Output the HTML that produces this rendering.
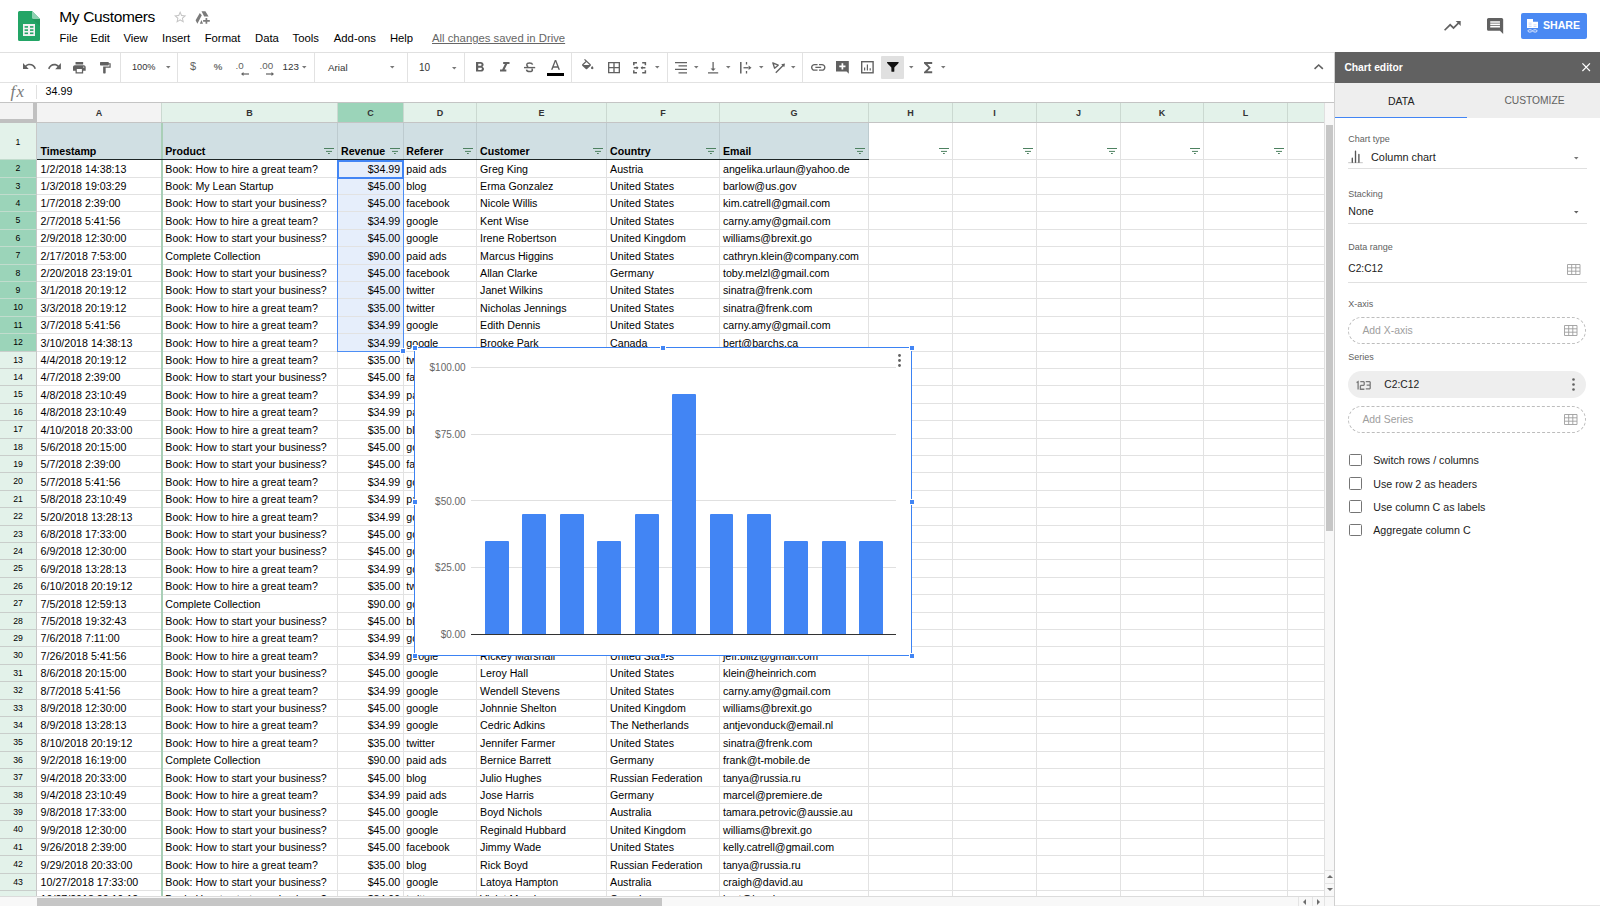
<!DOCTYPE html><html><head><meta charset="utf-8"><title>My Customers</title><style>
*{margin:0;padding:0;box-sizing:border-box}
html,body{width:1600px;height:906px;overflow:hidden;background:#fff;font-family:"Liberation Sans",sans-serif;color:#000}
.a{position:absolute}
.t{position:absolute;white-space:nowrap;line-height:1}
svg{position:absolute;overflow:visible}
</style></head><body>
<svg style="left:18px;top:11px" width="22" height="30" viewBox="0 0 22 30">
<path d="M1.5 0H14L22 8V28.5A1.5 1.5 0 0 1 20.5 30H1.5A1.5 1.5 0 0 1 0 28.5V1.5A1.5 1.5 0 0 1 1.5 0Z" fill="#23a566"/>
<path d="M14 0L22 8H15.5A1.5 1.5 0 0 1 14 6.5Z" fill="#8ed1b1"/>
<path d="M14 8L22 15V8Z" fill="#1e8e54" opacity="0.5"/>
<rect x="5" y="13" width="12" height="12" fill="#f1f1f1"/>
<rect x="6.6" y="15.1" width="3.4" height="1.6" fill="#23a566"/><rect x="12" y="15.1" width="3.4" height="1.6" fill="#23a566"/>
<rect x="6.6" y="18.3" width="3.4" height="1.6" fill="#23a566"/><rect x="12" y="18.3" width="3.4" height="1.6" fill="#23a566"/>
<rect x="6.6" y="21.5" width="3.4" height="1.6" fill="#23a566"/><rect x="12" y="21.5" width="3.4" height="1.6" fill="#23a566"/>
</svg>
<div class="t" style="left:59.3px;top:8.7px;font-size:15.5px;letter-spacing:-0.35px;color:#000">My Customers</div>
<svg style="left:173.6px;top:10.6px" width="12.3" height="11.9" viewBox="2 2 20 19.2" preserveAspectRatio="none"><path d="M22 9.24l-7.19-.62L12 2 9.19 8.63 2 9.24l5.46 4.73L5.82 21 12 17.27 18.18 21l-1.63-7.03L22 9.24zM12 15.4l-3.76 2.27 1-4.28-3.32-2.88 4.38-.38L12 6.1l1.710 4.04 4.38.38-3.32 2.88 1 4.28L12 15.4z" fill="#c4c4c4"/></svg>
<svg style="left:0;top:0" width="1" height="1"><path d="M195.6 20.3L199.8 12.9 201.8 15.3 197.4 23.8z M201.5 11.2H205.4L208.6 16.5H204.2z M199.8 23.8L201.5 20 203 23.8z" fill="#7b7b7b"/><path d="M206.4 17.9v5.9M203.1 20.8h6.7" stroke="#7b7b7b" stroke-width="1.7"/></svg>
<div class="t" style="left:59.5px;top:32.9px;font-size:11.3px;color:#000">File</div>
<div class="t" style="left:90.5px;top:32.9px;font-size:11.3px;color:#000">Edit</div>
<div class="t" style="left:123.5px;top:32.9px;font-size:11.3px;color:#000">View</div>
<div class="t" style="left:162px;top:32.9px;font-size:11.3px;color:#000">Insert</div>
<div class="t" style="left:204.7px;top:32.9px;font-size:11.3px;color:#000">Format</div>
<div class="t" style="left:255px;top:32.9px;font-size:11.3px;color:#000">Data</div>
<div class="t" style="left:292.5px;top:32.9px;font-size:11.3px;color:#000">Tools</div>
<div class="t" style="left:333.8px;top:32.9px;font-size:11.3px;color:#000">Add-ons</div>
<div class="t" style="left:389.9px;top:32.9px;font-size:11.3px;color:#000">Help</div>
<div class="t" style="left:432px;top:32.9px;font-size:11.3px;color:#666;text-decoration:underline">All changes saved in Drive</div>
<svg style="left:1444.3px;top:20.7px" width="16.7" height="9.8" viewBox="2 6 20 12" preserveAspectRatio="none"><path d="M16 6l2.29 2.29-4.88 4.88-4-4L2 16.59 3.41 18l6-6 4 4 6.3-6.29L22 12V6z" fill="#616161"/></svg>
<svg style="left:1486.9px;top:17.5px" width="16.2" height="16" viewBox="2 2 20 20" preserveAspectRatio="none"><path d="M21.99 4c0-1.1-.89-2-1.99-2H4c-1.1 0-2 .9-2 2v12c0 1.1.9 2 2 2h14l4 4-.01-18zM18 14H6v-2h12v2zm0-3H6V9h12v2zm0-3H6V6h12v2z" fill="#616161"/></svg>
<div class="a" style="left:1521px;top:12.7px;width:65.8px;height:26px;background:#4a89f3;border-radius:2px"></div>
<svg style="left:1527px;top:19px" width="11" height="14" viewBox="0 0 11 14"><path d="M0 0h6v2.8h5V9H0z" fill="#fff"/><path d="M1.6 4.1h3M1.6 5.8h3M6.5 5.8h3M1.6 7.5h3M6.5 7.5h3" stroke="#c5d6fb" stroke-width="0.8"/><path d="M5.5 11.9C4.5 10.4 0.9 10.2 0.9 11.9S4.5 13.4 5.5 11.9C6.5 10.4 10.1 10.2 10.1 11.9S6.5 13.4 5.5 11.9z" fill="none" stroke="#dfe8fd" stroke-width="1"/></svg>
<div class="t" style="left:1543px;top:20px;font-size:10.6px;font-weight:bold;color:#fff">SHARE</div>
<div class="a" style="left:0;top:52px;width:1600px;height:1px;background:#e0e0e0"></div>
<div class="a" style="left:0;top:82px;width:1335px;height:1px;background:#e2e2e2"></div>
<div class="a" style="left:120px;top:53px;width:1px;height:29px;background:#e2e2e2"></div>
<div class="a" style="left:177.4px;top:53px;width:1px;height:29px;background:#e2e2e2"></div>
<div class="a" style="left:314.4px;top:53px;width:1px;height:29px;background:#e2e2e2"></div>
<div class="a" style="left:406.6px;top:53px;width:1px;height:29px;background:#e2e2e2"></div>
<div class="a" style="left:464.4px;top:53px;width:1px;height:29px;background:#e2e2e2"></div>
<div class="a" style="left:571.4px;top:53px;width:1px;height:29px;background:#e2e2e2"></div>
<div class="a" style="left:667.2px;top:53px;width:1px;height:29px;background:#e2e2e2"></div>
<div class="a" style="left:802.3px;top:53px;width:1px;height:29px;background:#e2e2e2"></div>
<svg style="left:23px;top:63.3px" width="13" height="6.3" viewBox="2 7 20.47 9.5" preserveAspectRatio="none"><path d="M12.5 8c-2.65 0-5.05.99-6.9 2.6L2 7v9h9l-3.62-3.62c1.39-1.16 3.16-1.88 5.12-1.88 3.54 0 6.55 2.31 7.6 5.5l2.37-.78C21.08 11.03 17.15 8 12.5 8z" fill="#616161" /></svg>
<svg style="left:48.3px;top:63.3px" width="12.9" height="6.3" viewBox="1.54 7 20.46 9.22" preserveAspectRatio="none"><path d="M18.4 10.6C16.55 8.99 14.15 8 11.5 8c-4.650 0-8.58 3.03-9.96 7.22L3.9 16c1.05-3.19 4.05-5.5 7.6-5.5 1.95 0 3.73.72 5.12 1.88L13 16h9V7l-3.6 3.6z" fill="#616161" /></svg>
<svg style="left:73.1px;top:61.5px" width="12.7" height="11.4" viewBox="2 3 20 18" preserveAspectRatio="none"><path d="M19 8H5c-1.66 0-3 1.34-3 3v6h4v4h12v-4h4v-6c0-1.66-1.34-3-3-3zm-3 11H8v-5h8v5zm3-7c-.55 0-1-.45-1-1s.45-1 1-1 1 .45 1 1-.45 1-1 1zm-1-9H6v4h12V3z" fill="#616161" /></svg>
<svg style="left:99.5px;top:61.5px" width="10.7" height="11.4" viewBox="4 2 17 20" preserveAspectRatio="none"><path d="M18 4V3c0-.55-.45-1-1-1H5c-.55 0-1 .45-1 1v4c0 .55.45 1 1 1h12c.55 0 1-.45 1-1V6h1v4H9v11c0 .55.45 1 1 1h2c.55 0 1-.45 1-1v-9h8V4h-3z" fill="#616161" /></svg>
<div class="t" style="left:132px;top:63px;font-size:9.2px;color:#333">100%</div>
<svg style="left:165.5px;top:66.2px" width="4.5" height="2.6" viewBox="0 0 5 3" preserveAspectRatio="none"><path d="M0 0h5L2.5 3z" fill="#777"/></svg>
<div class="t" style="left:190px;top:61px;font-size:11px;color:#616161">$</div>
<div class="t" style="left:213.8px;top:61.6px;font-size:9.6px;color:#616161;-webkit-text-stroke:0.2px #616161">%</div>
<div class="t" style="left:235.5px;top:61px;font-size:9.8px;color:#616161">.0</div>
<svg style="left:241px;top:72px" width="8" height="4" viewBox="0 0 8 4"><path d="M8 2H1.5" stroke="#616161" stroke-width="1.2"/><path d="M0 2L2.5 0v4z" fill="#616161"/></svg>
<div class="t" style="left:259.5px;top:61px;font-size:9.8px;color:#616161">.00</div>
<svg style="left:266px;top:72px" width="8" height="4" viewBox="0 0 8 4"><path d="M0 2H6.5" stroke="#616161" stroke-width="1.2"/><path d="M8 2L5.5 0v4z" fill="#616161"/></svg>
<div class="t" style="left:282.5px;top:62px;font-size:9.8px;color:#333">123</div>
<svg style="left:302.3px;top:66.2px" width="4.5" height="2.6" viewBox="0 0 5 3" preserveAspectRatio="none"><path d="M0 0h5L2.5 3z" fill="#777"/></svg>
<div class="t" style="left:328px;top:62.5px;font-size:9.8px;color:#333">Arial</div>
<svg style="left:390.3px;top:66.2px" width="4.5" height="2.6" viewBox="0 0 5 3" preserveAspectRatio="none"><path d="M0 0h5L2.5 3z" fill="#777"/></svg>
<div class="t" style="left:419px;top:63px;font-size:10px;color:#333">10</div>
<svg style="left:452px;top:66.6px" width="4.5" height="2.6" viewBox="0 0 5 3" preserveAspectRatio="none"><path d="M0 0h5L2.5 3z" fill="#777"/></svg>
<svg style="left:475.5px;top:62.2px" width="8" height="9.6" viewBox="7 4 10.75 14" preserveAspectRatio="none"><path d="M15.6 10.79c.97-.67 1.65-1.77 1.650-2.79 0-2.26-1.75-4-4-4H7v14h7.04c2.09 0 3.71-1.7 3.71-3.79 0-1.52-.86-2.82-2.15-3.42zM10 6.5h3c.83 0 1.5.67 1.5 1.5s-.67 1.5-1.5 1.5h-3v-3zm3.5 9H10v-3h3.5c.83 0 1.5.67 1.5 1.5s-.67 1.5-1.5 1.5z" fill="#616161" /></svg>
<svg style="left:500px;top:62.2px" width="9.5" height="9.6" viewBox="6 4 12 14" preserveAspectRatio="none"><path d="M10 4v3h2.21l-3.42 8H6v3h8v-3h-2.21l3.42-8H18V4z" fill="#616161" /></svg>
<svg style="left:523.8px;top:62.2px" width="11.2" height="10.3" viewBox="0 0 11.2 10.3"><path d="M8.6 2.6C8.3 1.5 7.2 0.9 5.6 0.9 3.9 0.9 2.8 1.7 2.8 2.9c0 .9.5 1.4 1.4 1.8M7.6 6.6c.6.4.8.9.8 1.4 0 1.2-1.2 1.6-2.8 1.6-1.7 0-2.9-.7-3.1-2" fill="none" stroke="#616161" stroke-width="1.5"/><path d="M0 5.6h11.2" stroke="#616161" stroke-width="1.4"/></svg>
<svg style="left:550.5px;top:59.8px" width="9" height="9.8" viewBox="5.5 3 13 14" preserveAspectRatio="none"><path d="M11 3L5.5 17h2.25l1.12-3h6.25l1.12 3h2.25L13 3h-2zm-1.38 9L12 5.67 14.38 12H9.62z" fill="#616161" /></svg>
<div class="a" style="left:547px;top:73px;width:17px;height:3px;background:#000"></div>
<svg style="left:581.5px;top:59.3px" width="11.5" height="10.2" viewBox="3 0 18 17" preserveAspectRatio="none"><path d="M16.56 8.94L7.62 0 6.21 1.41l2.38 2.38-5.15 5.15c-.59.59-.59 1.54 0 2.12l5.5 5.5c.29.29.68.44 1.06.44s.77-.15 1.06-.44l5.5-5.5c.59-.58.59-1.53 0-2.12zM5.21 10L10 5.21 14.79 10H5.21zM19 11.5s-2 2.17-2 3.5c0 1.1.9 2 2 2s2-.9 2-2c0-1.33-2-3.5-2-3.5z" fill="#616161" /></svg>
<svg style="left:608px;top:61.5px" width="12" height="11.3" viewBox="3 3 18 18" preserveAspectRatio="none"><path d="M3 3v18h18V3H3zm8 16H5v-6h6v6zm0-8H5V5h6v6zm8 8h-6v-6h6v6zm0-8h-6V5h6v6z" fill="#616161" /></svg>
<svg style="left:632.9px;top:61.5px" width="13.2" height="11.5" viewBox="0 0 13.2 11.5"><path d="M0.8 3.2V0.8h3.2M9.2 0.8h3.2v2.4M0.8 8.3v2.4h3.2M9.2 10.7h3.2V8.3" fill="none" stroke="#616161" stroke-width="1.5"/><path d="M0.8 5.75h4.2M12.4 5.75H8.2" stroke="#616161" stroke-width="1.3"/><path d="M5.6 5.75L3.6 4v3.5zM7.6 5.75L9.6 4v3.5z" fill="#616161"/></svg>
<svg style="left:655.4px;top:66.2px" width="4.5" height="2.6" viewBox="0 0 5 3" preserveAspectRatio="none"><path d="M0 0h5L2.5 3z" fill="#777"/></svg>
<svg style="left:675px;top:61.5px" width="12" height="11.5" viewBox="0 0 12 11.5"><path d="M0 0.7h12M3.5 3.9h8.5M0 7.3h12M3.5 10.8h8.5" stroke="#616161" stroke-width="1.3"/></svg>
<svg style="left:693.8px;top:66.2px" width="4.5" height="2.6" viewBox="0 0 5 3" preserveAspectRatio="none"><path d="M0 0h5L2.5 3z" fill="#777"/></svg>
<svg style="left:708.2px;top:61.5px" width="10.2" height="11.5" viewBox="4 3 16 18" preserveAspectRatio="none"><path d="M16 13h-3V3h-2v10H8l4 4 4-4zM4 19v2h16v-2H4z" fill="#616161" /></svg>
<svg style="left:726px;top:66.2px" width="4.5" height="2.6" viewBox="0 0 5 3" preserveAspectRatio="none"><path d="M0 0h5L2.5 3z" fill="#777"/></svg>
<svg style="left:739.7px;top:61.5px" width="11.5" height="11.5" viewBox="0 0 11.5 11.5"><path d="M0.8 0v11.5" stroke="#616161" stroke-width="1.5"/><path d="M6.5 0v2.6M6.5 8.9v2.6" stroke="#616161" stroke-width="1.3"/><path d="M3.5 5.75h5" stroke="#616161" stroke-width="1.3"/><path d="M11.5 5.75L8.6 3.6v4.3z" fill="#616161"/></svg>
<svg style="left:758.6px;top:66.2px" width="4.5" height="2.6" viewBox="0 0 5 3" preserveAspectRatio="none"><path d="M0 0h5L2.5 3z" fill="#777"/></svg>
<svg style="left:771.8px;top:61.5px" width="13" height="11.3" viewBox="0 0 13 11.3"><path d="M0.8 0.8L6.2 3.2 2.6 6.2z" fill="none" stroke="#616161" stroke-width="1.3" stroke-linejoin="round"/><path d="M3.8 10.8L11.8 2.8" stroke="#616161" stroke-width="1.3"/><path d="M13 1.5L9.2 2.2 12.3 5.3z" fill="#616161"/></svg>
<svg style="left:790.9px;top:66.2px" width="4.5" height="2.6" viewBox="0 0 5 3" preserveAspectRatio="none"><path d="M0 0h5L2.5 3z" fill="#777"/></svg>
<svg style="left:810.5px;top:63.6px" width="14.5" height="6.8" viewBox="2 7 20 10" preserveAspectRatio="none"><path d="M3.9 12c0-1.71 1.39-3.1 3.1-3.1h4V7H7c-2.76 0-5 2.24-5 5s2.24 5 5 5h4v-1.9H7c-1.71 0-3.1-1.39-3.1-3.1zM8 13h8v-2H8v2zm9-6h-4v1.9h4c1.71 0 3.1 1.39 3.1 3.1s-1.39 3.1-3.1 3.1h-4V17h4c2.76 0 5-2.24 5-5s-2.24-5-5-5z" fill="#616161" /></svg>
<svg style="left:836.2px;top:61px" width="12.8" height="12.8" viewBox="0 0 12.8 12.8"><path d="M0 0h12.8v12.8l-2.2-2.2H0z" fill="#616161"/><path d="M6.4 2.2v6.2M3.3 5.3h6.2" stroke="#fff" stroke-width="1.7"/></svg>
<svg style="left:861.2px;top:61px" width="12.8" height="12.5" viewBox="0 0 12.8 12.5"><rect x="0.7" y="0.7" width="11.4" height="11.1" fill="none" stroke="#616161" stroke-width="1.4"/><path d="M3.6 9.6V6.6M6.4 9.6V3.6M9.2 9.6V7.2" stroke="#616161" stroke-width="1.2"/></svg>
<div class="a" style="left:881px;top:55.8px;width:23px;height:23px;background:#e0e0e0;border-radius:1px"></div>
<svg style="left:886.5px;top:62px" width="11.7" height="9.8" viewBox="4.04 4 15.9 16" preserveAspectRatio="none"><path d="M4.25 5.61C6.27 8.2 10 13 10 13v6c0 .55.45 1 1 1h2c.55 0 1-.45 1-1v-6s3.72-4.8 5.74-7.39c.51-.66.04-1.61-.79-1.61H5.04c-.83 0-1.3.95-.79 1.61z" fill="#111" /></svg>
<svg style="left:908.5px;top:66.4px" width="4.5" height="2.6" viewBox="0 0 5 3" preserveAspectRatio="none"><path d="M0 0h5L2.5 3z" fill="#777"/></svg>
<svg style="left:924px;top:61.5px" width="8.2" height="11.3" viewBox="6 4 12 16" preserveAspectRatio="none"><path d="M18 4H6v2l6.5 6L6 18v2h12v-3h-7l5-5-5-5h7z" fill="#616161" /></svg>
<svg style="left:940.8px;top:66.4px" width="4.5" height="2.6" viewBox="0 0 5 3" preserveAspectRatio="none"><path d="M0 0h5L2.5 3z" fill="#777"/></svg>
<svg style="left:1313.8px;top:64.2px" width="9.4" height="5.4" viewBox="6 8 12 7.41" preserveAspectRatio="none"><path d="M12 8l-6 6 1.41 1.41L12 10.83l4.59 4.58L18 14z" fill="#616161" /></svg>
<div class="t" style="left:10.5px;top:83px;font-family:'Liberation Serif',serif;font-style:italic;font-size:17px;letter-spacing:1.2px;color:#7a7a7a">fx</div>
<div class="a" style="left:36px;top:85px;width:1px;height:14px;background:#e0e0e0"></div>
<div class="t" style="left:45.6px;top:85.9px;font-size:10.7px;color:#000">34.99</div>
<div class="a" style="left:0;top:102.2px;width:1335px;height:1.2px;background:#c4c4c4"></div>
<div class="a" style="left:0;top:0;width:1324px;height:896px;overflow:hidden">
<div class="a" style="left:0px;top:103px;width:36px;height:19px;background:#f3f3f3;"></div>
<div class="a" style="left:36px;top:103px;width:125px;height:19px;background:#f3f3f3;"></div>
<div class="t" style="left:36px;top:109.2px;width:126px;text-align:center;font-size:9px;font-weight:bold;color:#333">A</div>
<div class="a" style="left:36px;top:103px;width:1px;height:19px;background:#c0c0c0;"></div>
<div class="a" style="left:161px;top:103px;width:176px;height:19px;background:#e3f2ea;"></div>
<div class="t" style="left:161px;top:109.2px;width:177px;text-align:center;font-size:9px;font-weight:bold;color:#333">B</div>
<div class="a" style="left:161px;top:103px;width:1px;height:19px;background:#cbd9d1;"></div>
<div class="a" style="left:337px;top:103px;width:66px;height:19px;background:#9bd4b9;"></div>
<div class="t" style="left:337px;top:109.2px;width:67px;text-align:center;font-size:9px;font-weight:bold;color:#333">C</div>
<div class="a" style="left:337px;top:103px;width:1px;height:19px;background:#cbd9d1;"></div>
<div class="a" style="left:403px;top:103px;width:73px;height:19px;background:#e3f2ea;"></div>
<div class="t" style="left:403px;top:109.2px;width:74px;text-align:center;font-size:9px;font-weight:bold;color:#333">D</div>
<div class="a" style="left:403px;top:103px;width:1px;height:19px;background:#cbd9d1;"></div>
<div class="a" style="left:476px;top:103px;width:130px;height:19px;background:#e3f2ea;"></div>
<div class="t" style="left:476px;top:109.2px;width:131px;text-align:center;font-size:9px;font-weight:bold;color:#333">E</div>
<div class="a" style="left:476px;top:103px;width:1px;height:19px;background:#cbd9d1;"></div>
<div class="a" style="left:606px;top:103px;width:113px;height:19px;background:#e3f2ea;"></div>
<div class="t" style="left:606px;top:109.2px;width:114px;text-align:center;font-size:9px;font-weight:bold;color:#333">F</div>
<div class="a" style="left:606px;top:103px;width:1px;height:19px;background:#cbd9d1;"></div>
<div class="a" style="left:719px;top:103px;width:149px;height:19px;background:#e3f2ea;"></div>
<div class="t" style="left:719px;top:109.2px;width:150px;text-align:center;font-size:9px;font-weight:bold;color:#333">G</div>
<div class="a" style="left:719px;top:103px;width:1px;height:19px;background:#cbd9d1;"></div>
<div class="a" style="left:868px;top:103px;width:84px;height:19px;background:#e3f2ea;"></div>
<div class="t" style="left:868px;top:109.2px;width:85px;text-align:center;font-size:9px;font-weight:bold;color:#333">H</div>
<div class="a" style="left:868px;top:103px;width:1px;height:19px;background:#cbd9d1;"></div>
<div class="a" style="left:952px;top:103px;width:84px;height:19px;background:#e3f2ea;"></div>
<div class="t" style="left:952px;top:109.2px;width:85px;text-align:center;font-size:9px;font-weight:bold;color:#333">I</div>
<div class="a" style="left:952px;top:103px;width:1px;height:19px;background:#cbd9d1;"></div>
<div class="a" style="left:1036px;top:103px;width:84px;height:19px;background:#e3f2ea;"></div>
<div class="t" style="left:1036px;top:109.2px;width:85px;text-align:center;font-size:9px;font-weight:bold;color:#333">J</div>
<div class="a" style="left:1036px;top:103px;width:1px;height:19px;background:#cbd9d1;"></div>
<div class="a" style="left:1120px;top:103px;width:83px;height:19px;background:#e3f2ea;"></div>
<div class="t" style="left:1120px;top:109.2px;width:84px;text-align:center;font-size:9px;font-weight:bold;color:#333">K</div>
<div class="a" style="left:1120px;top:103px;width:1px;height:19px;background:#cbd9d1;"></div>
<div class="a" style="left:1203px;top:103px;width:84px;height:19px;background:#e3f2ea;"></div>
<div class="t" style="left:1203px;top:109.2px;width:85px;text-align:center;font-size:9px;font-weight:bold;color:#333">L</div>
<div class="a" style="left:1203px;top:103px;width:1px;height:19px;background:#cbd9d1;"></div>
<div class="a" style="left:1287px;top:103px;width:37px;height:19px;background:#e3f2ea;"></div>
<div class="a" style="left:1287px;top:103px;width:1px;height:19px;background:#cbd9d1;"></div>
<div class="a" style="left:0px;top:123px;width:36px;height:36px;background:#e3f2ea;"></div>
<div class="t" style="left:0;top:137.6px;width:36px;text-align:center;font-size:8.7px;font-weight:normal;color:#000">1</div>
<div class="a" style="left:0px;top:159px;width:36px;height:18px;background:#9bd4b9;"></div>
<div class="t" style="left:0;top:164.2px;width:36px;text-align:center;font-size:8.7px;font-weight:normal;color:#000">2</div>
<div class="a" style="left:0px;top:177px;width:36px;height:17px;background:#9bd4b9;"></div>
<div class="t" style="left:0;top:181.6px;width:36px;text-align:center;font-size:8.7px;font-weight:normal;color:#000">3</div>
<div class="a" style="left:0px;top:194px;width:36px;height:17px;background:#9bd4b9;"></div>
<div class="t" style="left:0;top:199px;width:36px;text-align:center;font-size:8.7px;font-weight:normal;color:#000">4</div>
<div class="a" style="left:0px;top:211px;width:36px;height:18px;background:#9bd4b9;"></div>
<div class="t" style="left:0;top:216.4px;width:36px;text-align:center;font-size:8.7px;font-weight:normal;color:#000">5</div>
<div class="a" style="left:0px;top:229px;width:36px;height:17px;background:#9bd4b9;"></div>
<div class="t" style="left:0;top:233.8px;width:36px;text-align:center;font-size:8.7px;font-weight:normal;color:#000">6</div>
<div class="a" style="left:0px;top:246px;width:36px;height:18px;background:#9bd4b9;"></div>
<div class="t" style="left:0;top:251.2px;width:36px;text-align:center;font-size:8.7px;font-weight:normal;color:#000">7</div>
<div class="a" style="left:0px;top:264px;width:36px;height:17px;background:#9bd4b9;"></div>
<div class="t" style="left:0;top:268.6px;width:36px;text-align:center;font-size:8.7px;font-weight:normal;color:#000">8</div>
<div class="a" style="left:0px;top:281px;width:36px;height:17px;background:#9bd4b9;"></div>
<div class="t" style="left:0;top:286px;width:36px;text-align:center;font-size:8.7px;font-weight:normal;color:#000">9</div>
<div class="a" style="left:0px;top:298px;width:36px;height:18px;background:#9bd4b9;"></div>
<div class="t" style="left:0;top:303.4px;width:36px;text-align:center;font-size:8.7px;font-weight:normal;color:#000">10</div>
<div class="a" style="left:0px;top:316px;width:36px;height:17px;background:#9bd4b9;"></div>
<div class="t" style="left:0;top:320.8px;width:36px;text-align:center;font-size:8.7px;font-weight:normal;color:#000">11</div>
<div class="a" style="left:0px;top:333px;width:36px;height:18px;background:#9bd4b9;"></div>
<div class="t" style="left:0;top:338.2px;width:36px;text-align:center;font-size:8.7px;font-weight:normal;color:#000">12</div>
<div class="a" style="left:0px;top:351px;width:36px;height:17px;background:#e3f2ea;"></div>
<div class="t" style="left:0;top:355.6px;width:36px;text-align:center;font-size:8.7px;font-weight:normal;color:#000">13</div>
<div class="a" style="left:0px;top:368px;width:36px;height:17px;background:#e3f2ea;"></div>
<div class="t" style="left:0;top:373px;width:36px;text-align:center;font-size:8.7px;font-weight:normal;color:#000">14</div>
<div class="a" style="left:0px;top:385px;width:36px;height:18px;background:#e3f2ea;"></div>
<div class="t" style="left:0;top:390.4px;width:36px;text-align:center;font-size:8.7px;font-weight:normal;color:#000">15</div>
<div class="a" style="left:0px;top:403px;width:36px;height:17px;background:#e3f2ea;"></div>
<div class="t" style="left:0;top:407.8px;width:36px;text-align:center;font-size:8.7px;font-weight:normal;color:#000">16</div>
<div class="a" style="left:0px;top:420px;width:36px;height:18px;background:#e3f2ea;"></div>
<div class="t" style="left:0;top:425.2px;width:36px;text-align:center;font-size:8.7px;font-weight:normal;color:#000">17</div>
<div class="a" style="left:0px;top:438px;width:36px;height:17px;background:#e3f2ea;"></div>
<div class="t" style="left:0;top:442.6px;width:36px;text-align:center;font-size:8.7px;font-weight:normal;color:#000">18</div>
<div class="a" style="left:0px;top:455px;width:36px;height:17px;background:#e3f2ea;"></div>
<div class="t" style="left:0;top:460px;width:36px;text-align:center;font-size:8.7px;font-weight:normal;color:#000">19</div>
<div class="a" style="left:0px;top:472px;width:36px;height:18px;background:#e3f2ea;"></div>
<div class="t" style="left:0;top:477.4px;width:36px;text-align:center;font-size:8.7px;font-weight:normal;color:#000">20</div>
<div class="a" style="left:0px;top:490px;width:36px;height:17px;background:#e3f2ea;"></div>
<div class="t" style="left:0;top:494.8px;width:36px;text-align:center;font-size:8.7px;font-weight:normal;color:#000">21</div>
<div class="a" style="left:0px;top:507px;width:36px;height:18px;background:#e3f2ea;"></div>
<div class="t" style="left:0;top:512.2px;width:36px;text-align:center;font-size:8.7px;font-weight:normal;color:#000">22</div>
<div class="a" style="left:0px;top:525px;width:36px;height:17px;background:#e3f2ea;"></div>
<div class="t" style="left:0;top:529.6px;width:36px;text-align:center;font-size:8.7px;font-weight:normal;color:#000">23</div>
<div class="a" style="left:0px;top:542px;width:36px;height:17px;background:#e3f2ea;"></div>
<div class="t" style="left:0;top:547px;width:36px;text-align:center;font-size:8.7px;font-weight:normal;color:#000">24</div>
<div class="a" style="left:0px;top:559px;width:36px;height:18px;background:#e3f2ea;"></div>
<div class="t" style="left:0;top:564.4px;width:36px;text-align:center;font-size:8.7px;font-weight:normal;color:#000">25</div>
<div class="a" style="left:0px;top:577px;width:36px;height:17px;background:#e3f2ea;"></div>
<div class="t" style="left:0;top:581.8px;width:36px;text-align:center;font-size:8.7px;font-weight:normal;color:#000">26</div>
<div class="a" style="left:0px;top:594px;width:36px;height:18px;background:#e3f2ea;"></div>
<div class="t" style="left:0;top:599.2px;width:36px;text-align:center;font-size:8.7px;font-weight:normal;color:#000">27</div>
<div class="a" style="left:0px;top:612px;width:36px;height:17px;background:#e3f2ea;"></div>
<div class="t" style="left:0;top:616.6px;width:36px;text-align:center;font-size:8.7px;font-weight:normal;color:#000">28</div>
<div class="a" style="left:0px;top:629px;width:36px;height:17px;background:#e3f2ea;"></div>
<div class="t" style="left:0;top:634px;width:36px;text-align:center;font-size:8.7px;font-weight:normal;color:#000">29</div>
<div class="a" style="left:0px;top:646px;width:36px;height:18px;background:#e3f2ea;"></div>
<div class="t" style="left:0;top:651.4px;width:36px;text-align:center;font-size:8.7px;font-weight:normal;color:#000">30</div>
<div class="a" style="left:0px;top:664px;width:36px;height:17px;background:#e3f2ea;"></div>
<div class="t" style="left:0;top:668.8px;width:36px;text-align:center;font-size:8.7px;font-weight:normal;color:#000">31</div>
<div class="a" style="left:0px;top:681px;width:36px;height:18px;background:#e3f2ea;"></div>
<div class="t" style="left:0;top:686.2px;width:36px;text-align:center;font-size:8.7px;font-weight:normal;color:#000">32</div>
<div class="a" style="left:0px;top:699px;width:36px;height:17px;background:#e3f2ea;"></div>
<div class="t" style="left:0;top:703.6px;width:36px;text-align:center;font-size:8.7px;font-weight:normal;color:#000">33</div>
<div class="a" style="left:0px;top:716px;width:36px;height:17px;background:#e3f2ea;"></div>
<div class="t" style="left:0;top:721px;width:36px;text-align:center;font-size:8.7px;font-weight:normal;color:#000">34</div>
<div class="a" style="left:0px;top:733px;width:36px;height:18px;background:#e3f2ea;"></div>
<div class="t" style="left:0;top:738.4px;width:36px;text-align:center;font-size:8.7px;font-weight:normal;color:#000">35</div>
<div class="a" style="left:0px;top:751px;width:36px;height:17px;background:#e3f2ea;"></div>
<div class="t" style="left:0;top:755.8px;width:36px;text-align:center;font-size:8.7px;font-weight:normal;color:#000">36</div>
<div class="a" style="left:0px;top:768px;width:36px;height:18px;background:#e3f2ea;"></div>
<div class="t" style="left:0;top:773.2px;width:36px;text-align:center;font-size:8.7px;font-weight:normal;color:#000">37</div>
<div class="a" style="left:0px;top:786px;width:36px;height:17px;background:#e3f2ea;"></div>
<div class="t" style="left:0;top:790.6px;width:36px;text-align:center;font-size:8.7px;font-weight:normal;color:#000">38</div>
<div class="a" style="left:0px;top:803px;width:36px;height:17px;background:#e3f2ea;"></div>
<div class="t" style="left:0;top:808px;width:36px;text-align:center;font-size:8.7px;font-weight:normal;color:#000">39</div>
<div class="a" style="left:0px;top:820px;width:36px;height:18px;background:#e3f2ea;"></div>
<div class="t" style="left:0;top:825.4px;width:36px;text-align:center;font-size:8.7px;font-weight:normal;color:#000">40</div>
<div class="a" style="left:0px;top:838px;width:36px;height:17px;background:#e3f2ea;"></div>
<div class="t" style="left:0;top:842.8px;width:36px;text-align:center;font-size:8.7px;font-weight:normal;color:#000">41</div>
<div class="a" style="left:0px;top:855px;width:36px;height:18px;background:#e3f2ea;"></div>
<div class="t" style="left:0;top:860.2px;width:36px;text-align:center;font-size:8.7px;font-weight:normal;color:#000">42</div>
<div class="a" style="left:0px;top:873px;width:36px;height:17px;background:#e3f2ea;"></div>
<div class="t" style="left:0;top:877.6px;width:36px;text-align:center;font-size:8.7px;font-weight:normal;color:#000">43</div>
<div class="a" style="left:0px;top:890px;width:36px;height:6px;background:#e3f2ea;"></div>
<div class="t" style="left:0;top:895px;width:36px;text-align:center;font-size:8.7px;font-weight:normal;color:#000">44</div>
<div class="a" style="left:0px;top:159px;width:36px;height:1px;background:#c1dccd;"></div>
<div class="a" style="left:0px;top:177px;width:36px;height:1px;background:#c1dccd;"></div>
<div class="a" style="left:0px;top:194px;width:36px;height:1px;background:#c1dccd;"></div>
<div class="a" style="left:0px;top:211px;width:36px;height:1px;background:#c1dccd;"></div>
<div class="a" style="left:0px;top:229px;width:36px;height:1px;background:#c1dccd;"></div>
<div class="a" style="left:0px;top:246px;width:36px;height:1px;background:#c1dccd;"></div>
<div class="a" style="left:0px;top:264px;width:36px;height:1px;background:#c1dccd;"></div>
<div class="a" style="left:0px;top:281px;width:36px;height:1px;background:#c1dccd;"></div>
<div class="a" style="left:0px;top:298px;width:36px;height:1px;background:#c1dccd;"></div>
<div class="a" style="left:0px;top:316px;width:36px;height:1px;background:#c1dccd;"></div>
<div class="a" style="left:0px;top:333px;width:36px;height:1px;background:#c1dccd;"></div>
<div class="a" style="left:0px;top:351px;width:36px;height:1px;background:#c9cecb;"></div>
<div class="a" style="left:0px;top:368px;width:36px;height:1px;background:#c9cecb;"></div>
<div class="a" style="left:0px;top:385px;width:36px;height:1px;background:#c9cecb;"></div>
<div class="a" style="left:0px;top:403px;width:36px;height:1px;background:#c9cecb;"></div>
<div class="a" style="left:0px;top:420px;width:36px;height:1px;background:#c9cecb;"></div>
<div class="a" style="left:0px;top:438px;width:36px;height:1px;background:#c9cecb;"></div>
<div class="a" style="left:0px;top:455px;width:36px;height:1px;background:#c9cecb;"></div>
<div class="a" style="left:0px;top:472px;width:36px;height:1px;background:#c9cecb;"></div>
<div class="a" style="left:0px;top:490px;width:36px;height:1px;background:#c9cecb;"></div>
<div class="a" style="left:0px;top:507px;width:36px;height:1px;background:#c9cecb;"></div>
<div class="a" style="left:0px;top:525px;width:36px;height:1px;background:#c9cecb;"></div>
<div class="a" style="left:0px;top:542px;width:36px;height:1px;background:#c9cecb;"></div>
<div class="a" style="left:0px;top:559px;width:36px;height:1px;background:#c9cecb;"></div>
<div class="a" style="left:0px;top:577px;width:36px;height:1px;background:#c9cecb;"></div>
<div class="a" style="left:0px;top:594px;width:36px;height:1px;background:#c9cecb;"></div>
<div class="a" style="left:0px;top:612px;width:36px;height:1px;background:#c9cecb;"></div>
<div class="a" style="left:0px;top:629px;width:36px;height:1px;background:#c9cecb;"></div>
<div class="a" style="left:0px;top:646px;width:36px;height:1px;background:#c9cecb;"></div>
<div class="a" style="left:0px;top:664px;width:36px;height:1px;background:#c9cecb;"></div>
<div class="a" style="left:0px;top:681px;width:36px;height:1px;background:#c9cecb;"></div>
<div class="a" style="left:0px;top:699px;width:36px;height:1px;background:#c9cecb;"></div>
<div class="a" style="left:0px;top:716px;width:36px;height:1px;background:#c9cecb;"></div>
<div class="a" style="left:0px;top:733px;width:36px;height:1px;background:#c9cecb;"></div>
<div class="a" style="left:0px;top:751px;width:36px;height:1px;background:#c9cecb;"></div>
<div class="a" style="left:0px;top:768px;width:36px;height:1px;background:#c9cecb;"></div>
<div class="a" style="left:0px;top:786px;width:36px;height:1px;background:#c9cecb;"></div>
<div class="a" style="left:0px;top:803px;width:36px;height:1px;background:#c9cecb;"></div>
<div class="a" style="left:0px;top:820px;width:36px;height:1px;background:#c9cecb;"></div>
<div class="a" style="left:0px;top:838px;width:36px;height:1px;background:#c9cecb;"></div>
<div class="a" style="left:0px;top:855px;width:36px;height:1px;background:#c9cecb;"></div>
<div class="a" style="left:0px;top:873px;width:36px;height:1px;background:#c9cecb;"></div>
<div class="a" style="left:0px;top:890px;width:36px;height:1px;background:#c9cecb;"></div>
<div class="a" style="left:37px;top:123px;width:831px;height:36px;background:#d0dfe3;"></div>
<div class="a" style="left:337px;top:160px;width:66px;height:192px;background:#e6eefb;"></div>
<div class="a" style="left:868px;top:159px;width:456px;height:1px;background:#e2e2e2;"></div>
<div class="a" style="left:37px;top:177px;width:1287px;height:1px;background:#e2e2e2;"></div>
<div class="a" style="left:37px;top:194px;width:1287px;height:1px;background:#e2e2e2;"></div>
<div class="a" style="left:37px;top:211px;width:1287px;height:1px;background:#e2e2e2;"></div>
<div class="a" style="left:37px;top:229px;width:1287px;height:1px;background:#e2e2e2;"></div>
<div class="a" style="left:37px;top:246px;width:1287px;height:1px;background:#e2e2e2;"></div>
<div class="a" style="left:37px;top:264px;width:1287px;height:1px;background:#e2e2e2;"></div>
<div class="a" style="left:37px;top:281px;width:1287px;height:1px;background:#e2e2e2;"></div>
<div class="a" style="left:37px;top:298px;width:1287px;height:1px;background:#e2e2e2;"></div>
<div class="a" style="left:37px;top:316px;width:1287px;height:1px;background:#e2e2e2;"></div>
<div class="a" style="left:37px;top:333px;width:1287px;height:1px;background:#e2e2e2;"></div>
<div class="a" style="left:37px;top:351px;width:1287px;height:1px;background:#e2e2e2;"></div>
<div class="a" style="left:37px;top:368px;width:1287px;height:1px;background:#e2e2e2;"></div>
<div class="a" style="left:37px;top:385px;width:1287px;height:1px;background:#e2e2e2;"></div>
<div class="a" style="left:37px;top:403px;width:1287px;height:1px;background:#e2e2e2;"></div>
<div class="a" style="left:37px;top:420px;width:1287px;height:1px;background:#e2e2e2;"></div>
<div class="a" style="left:37px;top:438px;width:1287px;height:1px;background:#e2e2e2;"></div>
<div class="a" style="left:37px;top:455px;width:1287px;height:1px;background:#e2e2e2;"></div>
<div class="a" style="left:37px;top:472px;width:1287px;height:1px;background:#e2e2e2;"></div>
<div class="a" style="left:37px;top:490px;width:1287px;height:1px;background:#e2e2e2;"></div>
<div class="a" style="left:37px;top:507px;width:1287px;height:1px;background:#e2e2e2;"></div>
<div class="a" style="left:37px;top:525px;width:1287px;height:1px;background:#e2e2e2;"></div>
<div class="a" style="left:37px;top:542px;width:1287px;height:1px;background:#e2e2e2;"></div>
<div class="a" style="left:37px;top:559px;width:1287px;height:1px;background:#e2e2e2;"></div>
<div class="a" style="left:37px;top:577px;width:1287px;height:1px;background:#e2e2e2;"></div>
<div class="a" style="left:37px;top:594px;width:1287px;height:1px;background:#e2e2e2;"></div>
<div class="a" style="left:37px;top:612px;width:1287px;height:1px;background:#e2e2e2;"></div>
<div class="a" style="left:37px;top:629px;width:1287px;height:1px;background:#e2e2e2;"></div>
<div class="a" style="left:37px;top:646px;width:1287px;height:1px;background:#e2e2e2;"></div>
<div class="a" style="left:37px;top:664px;width:1287px;height:1px;background:#e2e2e2;"></div>
<div class="a" style="left:37px;top:681px;width:1287px;height:1px;background:#e2e2e2;"></div>
<div class="a" style="left:37px;top:699px;width:1287px;height:1px;background:#e2e2e2;"></div>
<div class="a" style="left:37px;top:716px;width:1287px;height:1px;background:#e2e2e2;"></div>
<div class="a" style="left:37px;top:733px;width:1287px;height:1px;background:#e2e2e2;"></div>
<div class="a" style="left:37px;top:751px;width:1287px;height:1px;background:#e2e2e2;"></div>
<div class="a" style="left:37px;top:768px;width:1287px;height:1px;background:#e2e2e2;"></div>
<div class="a" style="left:37px;top:786px;width:1287px;height:1px;background:#e2e2e2;"></div>
<div class="a" style="left:37px;top:803px;width:1287px;height:1px;background:#e2e2e2;"></div>
<div class="a" style="left:37px;top:820px;width:1287px;height:1px;background:#e2e2e2;"></div>
<div class="a" style="left:37px;top:838px;width:1287px;height:1px;background:#e2e2e2;"></div>
<div class="a" style="left:37px;top:855px;width:1287px;height:1px;background:#e2e2e2;"></div>
<div class="a" style="left:37px;top:873px;width:1287px;height:1px;background:#e2e2e2;"></div>
<div class="a" style="left:37px;top:890px;width:1287px;height:1px;background:#e2e2e2;"></div>
<div class="a" style="left:161px;top:123px;width:2px;height:773px;background:#a9cfb7;"></div>
<div class="a" style="left:337px;top:123px;width:1px;height:773px;background:#e2e2e2;"></div>
<div class="a" style="left:403px;top:123px;width:1px;height:773px;background:#e2e2e2;"></div>
<div class="a" style="left:476px;top:123px;width:1px;height:773px;background:#e2e2e2;"></div>
<div class="a" style="left:606px;top:123px;width:1px;height:773px;background:#e2e2e2;"></div>
<div class="a" style="left:719px;top:123px;width:1px;height:773px;background:#e2e2e2;"></div>
<div class="a" style="left:868px;top:123px;width:1px;height:773px;background:#e2e2e2;"></div>
<div class="a" style="left:952px;top:123px;width:1px;height:773px;background:#e2e2e2;"></div>
<div class="a" style="left:1036px;top:123px;width:1px;height:773px;background:#e2e2e2;"></div>
<div class="a" style="left:1120px;top:123px;width:1px;height:773px;background:#e2e2e2;"></div>
<div class="a" style="left:1203px;top:123px;width:1px;height:773px;background:#e2e2e2;"></div>
<div class="a" style="left:1287px;top:123px;width:1px;height:773px;background:#e2e2e2;"></div>
<div class="a" style="left:337px;top:123px;width:1px;height:36px;background:#bdcbcf;"></div>
<div class="a" style="left:403px;top:123px;width:1px;height:36px;background:#bdcbcf;"></div>
<div class="a" style="left:476px;top:123px;width:1px;height:36px;background:#bdcbcf;"></div>
<div class="a" style="left:606px;top:123px;width:1px;height:36px;background:#bdcbcf;"></div>
<div class="a" style="left:719px;top:123px;width:1px;height:36px;background:#bdcbcf;"></div>
<div class="a" style="left:868px;top:123px;width:1px;height:36px;background:#bdcbcf;"></div>
<div class="a" style="left:0px;top:122px;width:1324px;height:1px;background:#c4c4c4;"></div>
<div class="a" style="left:36px;top:123px;width:1px;height:773px;background:#c8c8c8;"></div>
<div class="a" style="left:33px;top:103px;width:3.8px;height:19px;background:#c0c0c0;"></div>
<div class="a" style="left:0px;top:119px;width:36.8px;height:4px;background:#c0c0c0;"></div>
<div class="a" style="left:37px;top:159px;width:832px;height:1px;background:#1d2626;"></div>
<div class="t" style="left:40.6px;top:146.4px;font-size:10.6px;font-weight:bold;color:#000">Timestamp</div>
<div class="t" style="left:165.3px;top:146.4px;font-size:10.6px;font-weight:bold;color:#000">Product</div>
<div class="t" style="left:341px;top:146.4px;font-size:10.6px;font-weight:bold;color:#000">Revenue</div>
<div class="t" style="left:406.3px;top:146.4px;font-size:10.6px;font-weight:bold;color:#000">Referer</div>
<div class="t" style="left:480.1px;top:146.4px;font-size:10.6px;font-weight:bold;color:#000">Customer</div>
<div class="t" style="left:610.1px;top:146.4px;font-size:10.6px;font-weight:bold;color:#000">Country</div>
<div class="t" style="left:723px;top:146.4px;font-size:10.6px;font-weight:bold;color:#000">Email</div>
<svg style="left:324px;top:148px" width="10" height="6" viewBox="0 0 10 6"><path d="M0 0.5h10M2 3.4h6M4 5.5h1.8" stroke="#4d8160" stroke-width="1"/></svg>
<svg style="left:390px;top:148px" width="10" height="6" viewBox="0 0 10 6"><path d="M0 0.5h10M2 3.4h6M4 5.5h1.8" stroke="#4d8160" stroke-width="1"/></svg>
<svg style="left:463px;top:148px" width="10" height="6" viewBox="0 0 10 6"><path d="M0 0.5h10M2 3.4h6M4 5.5h1.8" stroke="#4d8160" stroke-width="1"/></svg>
<svg style="left:593px;top:148px" width="10" height="6" viewBox="0 0 10 6"><path d="M0 0.5h10M2 3.4h6M4 5.5h1.8" stroke="#4d8160" stroke-width="1"/></svg>
<svg style="left:706px;top:148px" width="10" height="6" viewBox="0 0 10 6"><path d="M0 0.5h10M2 3.4h6M4 5.5h1.8" stroke="#4d8160" stroke-width="1"/></svg>
<svg style="left:855px;top:148px" width="10" height="6" viewBox="0 0 10 6"><path d="M0 0.5h10M2 3.4h6M4 5.5h1.8" stroke="#4d8160" stroke-width="1"/></svg>
<svg style="left:939px;top:148px" width="10" height="6" viewBox="0 0 10 6"><path d="M0 0.5h10M2 3.4h6M4 5.5h1.8" stroke="#4d8160" stroke-width="1"/></svg>
<svg style="left:1023px;top:148px" width="10" height="6" viewBox="0 0 10 6"><path d="M0 0.5h10M2 3.4h6M4 5.5h1.8" stroke="#4d8160" stroke-width="1"/></svg>
<svg style="left:1107px;top:148px" width="10" height="6" viewBox="0 0 10 6"><path d="M0 0.5h10M2 3.4h6M4 5.5h1.8" stroke="#4d8160" stroke-width="1"/></svg>
<svg style="left:1190px;top:148px" width="10" height="6" viewBox="0 0 10 6"><path d="M0 0.5h10M2 3.4h6M4 5.5h1.8" stroke="#4d8160" stroke-width="1"/></svg>
<svg style="left:1274px;top:148px" width="10" height="6" viewBox="0 0 10 6"><path d="M0 0.5h10M2 3.4h6M4 5.5h1.8" stroke="#4d8160" stroke-width="1"/></svg>
<div class="t" style="left:40.6px;top:163.5px;font-size:10.65px;color:#000">1/2/2018 14:38:13</div>
<div class="t" style="left:165.3px;top:163.5px;font-size:10.65px;color:#000">Book: How to hire a great team?</div>
<div class="t" style="left:337px;width:63.2px;text-align:right;top:163.5px;font-size:10.65px;color:#000">$34.99</div>
<div class="t" style="left:406.3px;top:163.5px;font-size:10.65px;color:#000">paid ads</div>
<div class="t" style="left:480.1px;top:163.5px;font-size:10.65px;color:#000">Greg King</div>
<div class="t" style="left:610.1px;top:163.5px;font-size:10.65px;color:#000">Austria</div>
<div class="t" style="left:723px;top:163.5px;font-size:10.65px;color:#000">angelika.urlaun@yahoo.de</div>
<div class="t" style="left:40.6px;top:180.9px;font-size:10.65px;color:#000">1/3/2018 19:03:29</div>
<div class="t" style="left:165.3px;top:180.9px;font-size:10.65px;color:#000">Book: My Lean Startup</div>
<div class="t" style="left:337px;width:63.2px;text-align:right;top:180.9px;font-size:10.65px;color:#000">$45.00</div>
<div class="t" style="left:406.3px;top:180.9px;font-size:10.65px;color:#000">blog</div>
<div class="t" style="left:480.1px;top:180.9px;font-size:10.65px;color:#000">Erma Gonzalez</div>
<div class="t" style="left:610.1px;top:180.9px;font-size:10.65px;color:#000">United States</div>
<div class="t" style="left:723px;top:180.9px;font-size:10.65px;color:#000">barlow@us.gov</div>
<div class="t" style="left:40.6px;top:198.3px;font-size:10.65px;color:#000">1/7/2018 2:39:00</div>
<div class="t" style="left:165.3px;top:198.3px;font-size:10.65px;color:#000">Book: How to start your business?</div>
<div class="t" style="left:337px;width:63.2px;text-align:right;top:198.3px;font-size:10.65px;color:#000">$45.00</div>
<div class="t" style="left:406.3px;top:198.3px;font-size:10.65px;color:#000">facebook</div>
<div class="t" style="left:480.1px;top:198.3px;font-size:10.65px;color:#000">Nicole Willis</div>
<div class="t" style="left:610.1px;top:198.3px;font-size:10.65px;color:#000">United States</div>
<div class="t" style="left:723px;top:198.3px;font-size:10.65px;color:#000">kim.catrell@gmail.com</div>
<div class="t" style="left:40.6px;top:215.7px;font-size:10.65px;color:#000">2/7/2018 5:41:56</div>
<div class="t" style="left:165.3px;top:215.7px;font-size:10.65px;color:#000">Book: How to hire a great team?</div>
<div class="t" style="left:337px;width:63.2px;text-align:right;top:215.7px;font-size:10.65px;color:#000">$34.99</div>
<div class="t" style="left:406.3px;top:215.7px;font-size:10.65px;color:#000">google</div>
<div class="t" style="left:480.1px;top:215.7px;font-size:10.65px;color:#000">Kent Wise</div>
<div class="t" style="left:610.1px;top:215.7px;font-size:10.65px;color:#000">United States</div>
<div class="t" style="left:723px;top:215.7px;font-size:10.65px;color:#000">carny.amy@gmail.com</div>
<div class="t" style="left:40.6px;top:233.1px;font-size:10.65px;color:#000">2/9/2018 12:30:00</div>
<div class="t" style="left:165.3px;top:233.1px;font-size:10.65px;color:#000">Book: How to start your business?</div>
<div class="t" style="left:337px;width:63.2px;text-align:right;top:233.1px;font-size:10.65px;color:#000">$45.00</div>
<div class="t" style="left:406.3px;top:233.1px;font-size:10.65px;color:#000">google</div>
<div class="t" style="left:480.1px;top:233.1px;font-size:10.65px;color:#000">Irene Robertson</div>
<div class="t" style="left:610.1px;top:233.1px;font-size:10.65px;color:#000">United Kingdom</div>
<div class="t" style="left:723px;top:233.1px;font-size:10.65px;color:#000">williams@brexit.go</div>
<div class="t" style="left:40.6px;top:250.5px;font-size:10.65px;color:#000">2/17/2018 7:53:00</div>
<div class="t" style="left:165.3px;top:250.5px;font-size:10.65px;color:#000">Complete Collection</div>
<div class="t" style="left:337px;width:63.2px;text-align:right;top:250.5px;font-size:10.65px;color:#000">$90.00</div>
<div class="t" style="left:406.3px;top:250.5px;font-size:10.65px;color:#000">paid ads</div>
<div class="t" style="left:480.1px;top:250.5px;font-size:10.65px;color:#000">Marcus Higgins</div>
<div class="t" style="left:610.1px;top:250.5px;font-size:10.65px;color:#000">United States</div>
<div class="t" style="left:723px;top:250.5px;font-size:10.65px;color:#000">cathryn.klein@company.com</div>
<div class="t" style="left:40.6px;top:267.9px;font-size:10.65px;color:#000">2/20/2018 23:19:01</div>
<div class="t" style="left:165.3px;top:267.9px;font-size:10.65px;color:#000">Book: How to start your business?</div>
<div class="t" style="left:337px;width:63.2px;text-align:right;top:267.9px;font-size:10.65px;color:#000">$45.00</div>
<div class="t" style="left:406.3px;top:267.9px;font-size:10.65px;color:#000">facebook</div>
<div class="t" style="left:480.1px;top:267.9px;font-size:10.65px;color:#000">Allan Clarke</div>
<div class="t" style="left:610.1px;top:267.9px;font-size:10.65px;color:#000">Germany</div>
<div class="t" style="left:723px;top:267.9px;font-size:10.65px;color:#000">toby.melzl@gmail.com</div>
<div class="t" style="left:40.6px;top:285.3px;font-size:10.65px;color:#000">3/1/2018 20:19:12</div>
<div class="t" style="left:165.3px;top:285.3px;font-size:10.65px;color:#000">Book: How to start your business?</div>
<div class="t" style="left:337px;width:63.2px;text-align:right;top:285.3px;font-size:10.65px;color:#000">$45.00</div>
<div class="t" style="left:406.3px;top:285.3px;font-size:10.65px;color:#000">twitter</div>
<div class="t" style="left:480.1px;top:285.3px;font-size:10.65px;color:#000">Janet Wilkins</div>
<div class="t" style="left:610.1px;top:285.3px;font-size:10.65px;color:#000">United States</div>
<div class="t" style="left:723px;top:285.3px;font-size:10.65px;color:#000">sinatra@frenk.com</div>
<div class="t" style="left:40.6px;top:302.7px;font-size:10.65px;color:#000">3/3/2018 20:19:12</div>
<div class="t" style="left:165.3px;top:302.7px;font-size:10.65px;color:#000">Book: How to hire a great team?</div>
<div class="t" style="left:337px;width:63.2px;text-align:right;top:302.7px;font-size:10.65px;color:#000">$35.00</div>
<div class="t" style="left:406.3px;top:302.7px;font-size:10.65px;color:#000">twitter</div>
<div class="t" style="left:480.1px;top:302.7px;font-size:10.65px;color:#000">Nicholas Jennings</div>
<div class="t" style="left:610.1px;top:302.7px;font-size:10.65px;color:#000">United States</div>
<div class="t" style="left:723px;top:302.7px;font-size:10.65px;color:#000">sinatra@frenk.com</div>
<div class="t" style="left:40.6px;top:320.1px;font-size:10.65px;color:#000">3/7/2018 5:41:56</div>
<div class="t" style="left:165.3px;top:320.1px;font-size:10.65px;color:#000">Book: How to hire a great team?</div>
<div class="t" style="left:337px;width:63.2px;text-align:right;top:320.1px;font-size:10.65px;color:#000">$34.99</div>
<div class="t" style="left:406.3px;top:320.1px;font-size:10.65px;color:#000">google</div>
<div class="t" style="left:480.1px;top:320.1px;font-size:10.65px;color:#000">Edith Dennis</div>
<div class="t" style="left:610.1px;top:320.1px;font-size:10.65px;color:#000">United States</div>
<div class="t" style="left:723px;top:320.1px;font-size:10.65px;color:#000">carny.amy@gmail.com</div>
<div class="t" style="left:40.6px;top:337.5px;font-size:10.65px;color:#000">3/10/2018 14:38:13</div>
<div class="t" style="left:165.3px;top:337.5px;font-size:10.65px;color:#000">Book: How to hire a great team?</div>
<div class="t" style="left:337px;width:63.2px;text-align:right;top:337.5px;font-size:10.65px;color:#000">$34.99</div>
<div class="t" style="left:406.3px;top:337.5px;font-size:10.65px;color:#000">google</div>
<div class="t" style="left:480.1px;top:337.5px;font-size:10.65px;color:#000">Brooke Park</div>
<div class="t" style="left:610.1px;top:337.5px;font-size:10.65px;color:#000">Canada</div>
<div class="t" style="left:723px;top:337.5px;font-size:10.65px;color:#000">bert@barchs.ca</div>
<div class="t" style="left:40.6px;top:354.9px;font-size:10.65px;color:#000">4/4/2018 20:19:12</div>
<div class="t" style="left:165.3px;top:354.9px;font-size:10.65px;color:#000">Book: How to hire a great team?</div>
<div class="t" style="left:337px;width:63.2px;text-align:right;top:354.9px;font-size:10.65px;color:#000">$35.00</div>
<div class="t" style="left:406.3px;top:354.9px;font-size:10.65px;color:#000">twitter</div>
<div class="t" style="left:480.1px;top:354.9px;font-size:10.65px;color:#000">Leslie Hart</div>
<div class="t" style="left:610.1px;top:354.9px;font-size:10.65px;color:#000">United States</div>
<div class="t" style="left:723px;top:354.9px;font-size:10.65px;color:#000">sinatra@frenk.com</div>
<div class="t" style="left:40.6px;top:372.3px;font-size:10.65px;color:#000">4/7/2018 2:39:00</div>
<div class="t" style="left:165.3px;top:372.3px;font-size:10.65px;color:#000">Book: How to start your business?</div>
<div class="t" style="left:337px;width:63.2px;text-align:right;top:372.3px;font-size:10.65px;color:#000">$45.00</div>
<div class="t" style="left:406.3px;top:372.3px;font-size:10.65px;color:#000">facebook</div>
<div class="t" style="left:480.1px;top:372.3px;font-size:10.65px;color:#000">Ora Hunt</div>
<div class="t" style="left:610.1px;top:372.3px;font-size:10.65px;color:#000">United States</div>
<div class="t" style="left:723px;top:372.3px;font-size:10.65px;color:#000">kim.catrell@gmail.com</div>
<div class="t" style="left:40.6px;top:389.7px;font-size:10.65px;color:#000">4/8/2018 23:10:49</div>
<div class="t" style="left:165.3px;top:389.7px;font-size:10.65px;color:#000">Book: How to hire a great team?</div>
<div class="t" style="left:337px;width:63.2px;text-align:right;top:389.7px;font-size:10.65px;color:#000">$34.99</div>
<div class="t" style="left:406.3px;top:389.7px;font-size:10.65px;color:#000">paid ads</div>
<div class="t" style="left:480.1px;top:389.7px;font-size:10.65px;color:#000">Kerry Ward</div>
<div class="t" style="left:610.1px;top:389.7px;font-size:10.65px;color:#000">Germany</div>
<div class="t" style="left:723px;top:389.7px;font-size:10.65px;color:#000">marcel@premiere.de</div>
<div class="t" style="left:40.6px;top:407.1px;font-size:10.65px;color:#000">4/8/2018 23:10:49</div>
<div class="t" style="left:165.3px;top:407.1px;font-size:10.65px;color:#000">Book: How to hire a great team?</div>
<div class="t" style="left:337px;width:63.2px;text-align:right;top:407.1px;font-size:10.65px;color:#000">$34.99</div>
<div class="t" style="left:406.3px;top:407.1px;font-size:10.65px;color:#000">paid ads</div>
<div class="t" style="left:480.1px;top:407.1px;font-size:10.65px;color:#000">Kerry Ward</div>
<div class="t" style="left:610.1px;top:407.1px;font-size:10.65px;color:#000">Germany</div>
<div class="t" style="left:723px;top:407.1px;font-size:10.65px;color:#000">marcel@premiere.de</div>
<div class="t" style="left:40.6px;top:424.5px;font-size:10.65px;color:#000">4/10/2018 20:33:00</div>
<div class="t" style="left:165.3px;top:424.5px;font-size:10.65px;color:#000">Book: How to hire a great team?</div>
<div class="t" style="left:337px;width:63.2px;text-align:right;top:424.5px;font-size:10.65px;color:#000">$35.00</div>
<div class="t" style="left:406.3px;top:424.5px;font-size:10.65px;color:#000">blog</div>
<div class="t" style="left:480.1px;top:424.5px;font-size:10.65px;color:#000">Rita Bell</div>
<div class="t" style="left:610.1px;top:424.5px;font-size:10.65px;color:#000">Russian Federation</div>
<div class="t" style="left:723px;top:424.5px;font-size:10.65px;color:#000">tanya@russia.ru</div>
<div class="t" style="left:40.6px;top:441.9px;font-size:10.65px;color:#000">5/6/2018 20:15:00</div>
<div class="t" style="left:165.3px;top:441.9px;font-size:10.65px;color:#000">Book: How to start your business?</div>
<div class="t" style="left:337px;width:63.2px;text-align:right;top:441.9px;font-size:10.65px;color:#000">$45.00</div>
<div class="t" style="left:406.3px;top:441.9px;font-size:10.65px;color:#000">google</div>
<div class="t" style="left:480.1px;top:441.9px;font-size:10.65px;color:#000">Sam Hill</div>
<div class="t" style="left:610.1px;top:441.9px;font-size:10.65px;color:#000">United States</div>
<div class="t" style="left:723px;top:441.9px;font-size:10.65px;color:#000">klein@heinrich.com</div>
<div class="t" style="left:40.6px;top:459.3px;font-size:10.65px;color:#000">5/7/2018 2:39:00</div>
<div class="t" style="left:165.3px;top:459.3px;font-size:10.65px;color:#000">Book: How to start your business?</div>
<div class="t" style="left:337px;width:63.2px;text-align:right;top:459.3px;font-size:10.65px;color:#000">$45.00</div>
<div class="t" style="left:406.3px;top:459.3px;font-size:10.65px;color:#000">facebook</div>
<div class="t" style="left:480.1px;top:459.3px;font-size:10.65px;color:#000">Amy Stone</div>
<div class="t" style="left:610.1px;top:459.3px;font-size:10.65px;color:#000">United States</div>
<div class="t" style="left:723px;top:459.3px;font-size:10.65px;color:#000">kim.catrell@gmail.com</div>
<div class="t" style="left:40.6px;top:476.7px;font-size:10.65px;color:#000">5/7/2018 5:41:56</div>
<div class="t" style="left:165.3px;top:476.7px;font-size:10.65px;color:#000">Book: How to hire a great team?</div>
<div class="t" style="left:337px;width:63.2px;text-align:right;top:476.7px;font-size:10.65px;color:#000">$34.99</div>
<div class="t" style="left:406.3px;top:476.7px;font-size:10.65px;color:#000">google</div>
<div class="t" style="left:480.1px;top:476.7px;font-size:10.65px;color:#000">Lee Fox</div>
<div class="t" style="left:610.1px;top:476.7px;font-size:10.65px;color:#000">United States</div>
<div class="t" style="left:723px;top:476.7px;font-size:10.65px;color:#000">carny.amy@gmail.com</div>
<div class="t" style="left:40.6px;top:494.1px;font-size:10.65px;color:#000">5/8/2018 23:10:49</div>
<div class="t" style="left:165.3px;top:494.1px;font-size:10.65px;color:#000">Book: How to hire a great team?</div>
<div class="t" style="left:337px;width:63.2px;text-align:right;top:494.1px;font-size:10.65px;color:#000">$34.99</div>
<div class="t" style="left:406.3px;top:494.1px;font-size:10.65px;color:#000">paid ads</div>
<div class="t" style="left:480.1px;top:494.1px;font-size:10.65px;color:#000">Ian Cole</div>
<div class="t" style="left:610.1px;top:494.1px;font-size:10.65px;color:#000">Germany</div>
<div class="t" style="left:723px;top:494.1px;font-size:10.65px;color:#000">marcel@premiere.de</div>
<div class="t" style="left:40.6px;top:511.5px;font-size:10.65px;color:#000">5/20/2018 13:28:13</div>
<div class="t" style="left:165.3px;top:511.5px;font-size:10.65px;color:#000">Book: How to hire a great team?</div>
<div class="t" style="left:337px;width:63.2px;text-align:right;top:511.5px;font-size:10.65px;color:#000">$34.99</div>
<div class="t" style="left:406.3px;top:511.5px;font-size:10.65px;color:#000">google</div>
<div class="t" style="left:480.1px;top:511.5px;font-size:10.65px;color:#000">Tom Reed</div>
<div class="t" style="left:610.1px;top:511.5px;font-size:10.65px;color:#000">United States</div>
<div class="t" style="left:723px;top:511.5px;font-size:10.65px;color:#000">carny.amy@gmail.com</div>
<div class="t" style="left:40.6px;top:528.9px;font-size:10.65px;color:#000">6/8/2018 17:33:00</div>
<div class="t" style="left:165.3px;top:528.9px;font-size:10.65px;color:#000">Book: How to start your business?</div>
<div class="t" style="left:337px;width:63.2px;text-align:right;top:528.9px;font-size:10.65px;color:#000">$45.00</div>
<div class="t" style="left:406.3px;top:528.9px;font-size:10.65px;color:#000">google</div>
<div class="t" style="left:480.1px;top:528.9px;font-size:10.65px;color:#000">Eva Long</div>
<div class="t" style="left:610.1px;top:528.9px;font-size:10.65px;color:#000">Australia</div>
<div class="t" style="left:723px;top:528.9px;font-size:10.65px;color:#000">tamara.petrovic@aussie.au</div>
<div class="t" style="left:40.6px;top:546.3px;font-size:10.65px;color:#000">6/9/2018 12:30:00</div>
<div class="t" style="left:165.3px;top:546.3px;font-size:10.65px;color:#000">Book: How to start your business?</div>
<div class="t" style="left:337px;width:63.2px;text-align:right;top:546.3px;font-size:10.65px;color:#000">$45.00</div>
<div class="t" style="left:406.3px;top:546.3px;font-size:10.65px;color:#000">google</div>
<div class="t" style="left:480.1px;top:546.3px;font-size:10.65px;color:#000">Joe Page</div>
<div class="t" style="left:610.1px;top:546.3px;font-size:10.65px;color:#000">United Kingdom</div>
<div class="t" style="left:723px;top:546.3px;font-size:10.65px;color:#000">williams@brexit.go</div>
<div class="t" style="left:40.6px;top:563.7px;font-size:10.65px;color:#000">6/9/2018 13:28:13</div>
<div class="t" style="left:165.3px;top:563.7px;font-size:10.65px;color:#000">Book: How to hire a great team?</div>
<div class="t" style="left:337px;width:63.2px;text-align:right;top:563.7px;font-size:10.65px;color:#000">$34.99</div>
<div class="t" style="left:406.3px;top:563.7px;font-size:10.65px;color:#000">google</div>
<div class="t" style="left:480.1px;top:563.7px;font-size:10.65px;color:#000">Ann Ross</div>
<div class="t" style="left:610.1px;top:563.7px;font-size:10.65px;color:#000">United States</div>
<div class="t" style="left:723px;top:563.7px;font-size:10.65px;color:#000">carny.amy@gmail.com</div>
<div class="t" style="left:40.6px;top:581.1px;font-size:10.65px;color:#000">6/10/2018 20:19:12</div>
<div class="t" style="left:165.3px;top:581.1px;font-size:10.65px;color:#000">Book: How to hire a great team?</div>
<div class="t" style="left:337px;width:63.2px;text-align:right;top:581.1px;font-size:10.65px;color:#000">$35.00</div>
<div class="t" style="left:406.3px;top:581.1px;font-size:10.65px;color:#000">twitter</div>
<div class="t" style="left:480.1px;top:581.1px;font-size:10.65px;color:#000">Max Gray</div>
<div class="t" style="left:610.1px;top:581.1px;font-size:10.65px;color:#000">United States</div>
<div class="t" style="left:723px;top:581.1px;font-size:10.65px;color:#000">sinatra@frenk.com</div>
<div class="t" style="left:40.6px;top:598.5px;font-size:10.65px;color:#000">7/5/2018 12:59:13</div>
<div class="t" style="left:165.3px;top:598.5px;font-size:10.65px;color:#000">Complete Collection</div>
<div class="t" style="left:337px;width:63.2px;text-align:right;top:598.5px;font-size:10.65px;color:#000">$90.00</div>
<div class="t" style="left:406.3px;top:598.5px;font-size:10.65px;color:#000">google</div>
<div class="t" style="left:480.1px;top:598.5px;font-size:10.65px;color:#000">Kim West</div>
<div class="t" style="left:610.1px;top:598.5px;font-size:10.65px;color:#000">United States</div>
<div class="t" style="left:723px;top:598.5px;font-size:10.65px;color:#000">cathryn.klein@company.com</div>
<div class="t" style="left:40.6px;top:615.9px;font-size:10.65px;color:#000">7/5/2018 19:32:43</div>
<div class="t" style="left:165.3px;top:615.9px;font-size:10.65px;color:#000">Book: How to start your business?</div>
<div class="t" style="left:337px;width:63.2px;text-align:right;top:615.9px;font-size:10.65px;color:#000">$45.00</div>
<div class="t" style="left:406.3px;top:615.9px;font-size:10.65px;color:#000">blog</div>
<div class="t" style="left:480.1px;top:615.9px;font-size:10.65px;color:#000">Ray Cruz</div>
<div class="t" style="left:610.1px;top:615.9px;font-size:10.65px;color:#000">Russian Federation</div>
<div class="t" style="left:723px;top:615.9px;font-size:10.65px;color:#000">tanya@russia.ru</div>
<div class="t" style="left:40.6px;top:633.3px;font-size:10.65px;color:#000">7/6/2018 7:11:00</div>
<div class="t" style="left:165.3px;top:633.3px;font-size:10.65px;color:#000">Book: How to hire a great team?</div>
<div class="t" style="left:337px;width:63.2px;text-align:right;top:633.3px;font-size:10.65px;color:#000">$34.99</div>
<div class="t" style="left:406.3px;top:633.3px;font-size:10.65px;color:#000">google</div>
<div class="t" style="left:480.1px;top:633.3px;font-size:10.65px;color:#000">Dan Moss</div>
<div class="t" style="left:610.1px;top:633.3px;font-size:10.65px;color:#000">United States</div>
<div class="t" style="left:723px;top:633.3px;font-size:10.65px;color:#000">carny.amy@gmail.com</div>
<div class="t" style="left:40.6px;top:650.7px;font-size:10.65px;color:#000">7/26/2018 5:41:56</div>
<div class="t" style="left:165.3px;top:650.7px;font-size:10.65px;color:#000">Book: How to hire a great team?</div>
<div class="t" style="left:337px;width:63.2px;text-align:right;top:650.7px;font-size:10.65px;color:#000">$34.99</div>
<div class="t" style="left:406.3px;top:650.7px;font-size:10.65px;color:#000">google</div>
<div class="t" style="left:480.1px;top:650.7px;font-size:10.65px;color:#000">Rickey Marshall</div>
<div class="t" style="left:610.1px;top:650.7px;font-size:10.65px;color:#000">United States</div>
<div class="t" style="left:723px;top:650.7px;font-size:10.65px;color:#000">jeff.blitz@gmail.com</div>
<div class="t" style="left:40.6px;top:668.1px;font-size:10.65px;color:#000">8/6/2018 20:15:00</div>
<div class="t" style="left:165.3px;top:668.1px;font-size:10.65px;color:#000">Book: How to start your business?</div>
<div class="t" style="left:337px;width:63.2px;text-align:right;top:668.1px;font-size:10.65px;color:#000">$45.00</div>
<div class="t" style="left:406.3px;top:668.1px;font-size:10.65px;color:#000">google</div>
<div class="t" style="left:480.1px;top:668.1px;font-size:10.65px;color:#000">Leroy Hall</div>
<div class="t" style="left:610.1px;top:668.1px;font-size:10.65px;color:#000">United States</div>
<div class="t" style="left:723px;top:668.1px;font-size:10.65px;color:#000">klein@heinrich.com</div>
<div class="t" style="left:40.6px;top:685.5px;font-size:10.65px;color:#000">8/7/2018 5:41:56</div>
<div class="t" style="left:165.3px;top:685.5px;font-size:10.65px;color:#000">Book: How to hire a great team?</div>
<div class="t" style="left:337px;width:63.2px;text-align:right;top:685.5px;font-size:10.65px;color:#000">$34.99</div>
<div class="t" style="left:406.3px;top:685.5px;font-size:10.65px;color:#000">google</div>
<div class="t" style="left:480.1px;top:685.5px;font-size:10.65px;color:#000">Wendell Stevens</div>
<div class="t" style="left:610.1px;top:685.5px;font-size:10.65px;color:#000">United States</div>
<div class="t" style="left:723px;top:685.5px;font-size:10.65px;color:#000">carny.amy@gmail.com</div>
<div class="t" style="left:40.6px;top:702.9px;font-size:10.65px;color:#000">8/9/2018 12:30:00</div>
<div class="t" style="left:165.3px;top:702.9px;font-size:10.65px;color:#000">Book: How to start your business?</div>
<div class="t" style="left:337px;width:63.2px;text-align:right;top:702.9px;font-size:10.65px;color:#000">$45.00</div>
<div class="t" style="left:406.3px;top:702.9px;font-size:10.65px;color:#000">google</div>
<div class="t" style="left:480.1px;top:702.9px;font-size:10.65px;color:#000">Johnnie Shelton</div>
<div class="t" style="left:610.1px;top:702.9px;font-size:10.65px;color:#000">United Kingdom</div>
<div class="t" style="left:723px;top:702.9px;font-size:10.65px;color:#000">williams@brexit.go</div>
<div class="t" style="left:40.6px;top:720.3px;font-size:10.65px;color:#000">8/9/2018 13:28:13</div>
<div class="t" style="left:165.3px;top:720.3px;font-size:10.65px;color:#000">Book: How to hire a great team?</div>
<div class="t" style="left:337px;width:63.2px;text-align:right;top:720.3px;font-size:10.65px;color:#000">$34.99</div>
<div class="t" style="left:406.3px;top:720.3px;font-size:10.65px;color:#000">google</div>
<div class="t" style="left:480.1px;top:720.3px;font-size:10.65px;color:#000">Cedric Adkins</div>
<div class="t" style="left:610.1px;top:720.3px;font-size:10.65px;color:#000">The Netherlands</div>
<div class="t" style="left:723px;top:720.3px;font-size:10.65px;color:#000">antjevonduck@email.nl</div>
<div class="t" style="left:40.6px;top:737.7px;font-size:10.65px;color:#000">8/10/2018 20:19:12</div>
<div class="t" style="left:165.3px;top:737.7px;font-size:10.65px;color:#000">Book: How to hire a great team?</div>
<div class="t" style="left:337px;width:63.2px;text-align:right;top:737.7px;font-size:10.65px;color:#000">$35.00</div>
<div class="t" style="left:406.3px;top:737.7px;font-size:10.65px;color:#000">twitter</div>
<div class="t" style="left:480.1px;top:737.7px;font-size:10.65px;color:#000">Jennifer Farmer</div>
<div class="t" style="left:610.1px;top:737.7px;font-size:10.65px;color:#000">United States</div>
<div class="t" style="left:723px;top:737.7px;font-size:10.65px;color:#000">sinatra@frenk.com</div>
<div class="t" style="left:40.6px;top:755.1px;font-size:10.65px;color:#000">9/2/2018 16:19:00</div>
<div class="t" style="left:165.3px;top:755.1px;font-size:10.65px;color:#000">Complete Collection</div>
<div class="t" style="left:337px;width:63.2px;text-align:right;top:755.1px;font-size:10.65px;color:#000">$90.00</div>
<div class="t" style="left:406.3px;top:755.1px;font-size:10.65px;color:#000">paid ads</div>
<div class="t" style="left:480.1px;top:755.1px;font-size:10.65px;color:#000">Bernice Barrett</div>
<div class="t" style="left:610.1px;top:755.1px;font-size:10.65px;color:#000">Germany</div>
<div class="t" style="left:723px;top:755.1px;font-size:10.65px;color:#000">frank@t-mobile.de</div>
<div class="t" style="left:40.6px;top:772.5px;font-size:10.65px;color:#000">9/4/2018 20:33:00</div>
<div class="t" style="left:165.3px;top:772.5px;font-size:10.65px;color:#000">Book: How to start your business?</div>
<div class="t" style="left:337px;width:63.2px;text-align:right;top:772.5px;font-size:10.65px;color:#000">$45.00</div>
<div class="t" style="left:406.3px;top:772.5px;font-size:10.65px;color:#000">blog</div>
<div class="t" style="left:480.1px;top:772.5px;font-size:10.65px;color:#000">Julio Hughes</div>
<div class="t" style="left:610.1px;top:772.5px;font-size:10.65px;color:#000">Russian Federation</div>
<div class="t" style="left:723px;top:772.5px;font-size:10.65px;color:#000">tanya@russia.ru</div>
<div class="t" style="left:40.6px;top:789.9px;font-size:10.65px;color:#000">9/4/2018 23:10:49</div>
<div class="t" style="left:165.3px;top:789.9px;font-size:10.65px;color:#000">Book: How to hire a great team?</div>
<div class="t" style="left:337px;width:63.2px;text-align:right;top:789.9px;font-size:10.65px;color:#000">$34.99</div>
<div class="t" style="left:406.3px;top:789.9px;font-size:10.65px;color:#000">paid ads</div>
<div class="t" style="left:480.1px;top:789.9px;font-size:10.65px;color:#000">Jose Harris</div>
<div class="t" style="left:610.1px;top:789.9px;font-size:10.65px;color:#000">Germany</div>
<div class="t" style="left:723px;top:789.9px;font-size:10.65px;color:#000">marcel@premiere.de</div>
<div class="t" style="left:40.6px;top:807.3px;font-size:10.65px;color:#000">9/8/2018 17:33:00</div>
<div class="t" style="left:165.3px;top:807.3px;font-size:10.65px;color:#000">Book: How to start your business?</div>
<div class="t" style="left:337px;width:63.2px;text-align:right;top:807.3px;font-size:10.65px;color:#000">$45.00</div>
<div class="t" style="left:406.3px;top:807.3px;font-size:10.65px;color:#000">google</div>
<div class="t" style="left:480.1px;top:807.3px;font-size:10.65px;color:#000">Boyd Nichols</div>
<div class="t" style="left:610.1px;top:807.3px;font-size:10.65px;color:#000">Australia</div>
<div class="t" style="left:723px;top:807.3px;font-size:10.65px;color:#000">tamara.petrovic@aussie.au</div>
<div class="t" style="left:40.6px;top:824.7px;font-size:10.65px;color:#000">9/9/2018 12:30:00</div>
<div class="t" style="left:165.3px;top:824.7px;font-size:10.65px;color:#000">Book: How to start your business?</div>
<div class="t" style="left:337px;width:63.2px;text-align:right;top:824.7px;font-size:10.65px;color:#000">$45.00</div>
<div class="t" style="left:406.3px;top:824.7px;font-size:10.65px;color:#000">google</div>
<div class="t" style="left:480.1px;top:824.7px;font-size:10.65px;color:#000">Reginald Hubbard</div>
<div class="t" style="left:610.1px;top:824.7px;font-size:10.65px;color:#000">United Kingdom</div>
<div class="t" style="left:723px;top:824.7px;font-size:10.65px;color:#000">williams@brexit.go</div>
<div class="t" style="left:40.6px;top:842.1px;font-size:10.65px;color:#000">9/26/2018 2:39:00</div>
<div class="t" style="left:165.3px;top:842.1px;font-size:10.65px;color:#000">Book: How to start your business?</div>
<div class="t" style="left:337px;width:63.2px;text-align:right;top:842.1px;font-size:10.65px;color:#000">$45.00</div>
<div class="t" style="left:406.3px;top:842.1px;font-size:10.65px;color:#000">facebook</div>
<div class="t" style="left:480.1px;top:842.1px;font-size:10.65px;color:#000">Jimmy Wade</div>
<div class="t" style="left:610.1px;top:842.1px;font-size:10.65px;color:#000">United States</div>
<div class="t" style="left:723px;top:842.1px;font-size:10.65px;color:#000">kelly.catrell@gmail.com</div>
<div class="t" style="left:40.6px;top:859.5px;font-size:10.65px;color:#000">9/29/2018 20:33:00</div>
<div class="t" style="left:165.3px;top:859.5px;font-size:10.65px;color:#000">Book: How to hire a great team?</div>
<div class="t" style="left:337px;width:63.2px;text-align:right;top:859.5px;font-size:10.65px;color:#000">$35.00</div>
<div class="t" style="left:406.3px;top:859.5px;font-size:10.65px;color:#000">blog</div>
<div class="t" style="left:480.1px;top:859.5px;font-size:10.65px;color:#000">Rick Boyd</div>
<div class="t" style="left:610.1px;top:859.5px;font-size:10.65px;color:#000">Russian Federation</div>
<div class="t" style="left:723px;top:859.5px;font-size:10.65px;color:#000">tanya@russia.ru</div>
<div class="t" style="left:40.6px;top:876.9px;font-size:10.65px;color:#000">10/27/2018 17:33:00</div>
<div class="t" style="left:165.3px;top:876.9px;font-size:10.65px;color:#000">Book: How to start your business?</div>
<div class="t" style="left:337px;width:63.2px;text-align:right;top:876.9px;font-size:10.65px;color:#000">$45.00</div>
<div class="t" style="left:406.3px;top:876.9px;font-size:10.65px;color:#000">google</div>
<div class="t" style="left:480.1px;top:876.9px;font-size:10.65px;color:#000">Latoya Hampton</div>
<div class="t" style="left:610.1px;top:876.9px;font-size:10.65px;color:#000">Australia</div>
<div class="t" style="left:723px;top:876.9px;font-size:10.65px;color:#000">craigh@david.au</div>
<div class="t" style="left:40.6px;top:894.3px;font-size:10.65px;color:#000">10/27/2018 20:19:12</div>
<div class="t" style="left:165.3px;top:894.3px;font-size:10.65px;color:#000">Book: How to start your business?</div>
<div class="t" style="left:337px;width:63.2px;text-align:right;top:894.3px;font-size:10.65px;color:#000">$34.99</div>
<div class="t" style="left:406.3px;top:894.3px;font-size:10.65px;color:#000">twitter</div>
<div class="t" style="left:480.1px;top:894.3px;font-size:10.65px;color:#000">Violet Murphy</div>
<div class="t" style="left:610.1px;top:894.3px;font-size:10.65px;color:#000">Canada</div>
<div class="t" style="left:723px;top:894.3px;font-size:10.65px;color:#000">bert@barchs.ca</div>
<div class="a" style="left:337px;top:160px;width:67px;height:192px;border:1px solid #4d8ef5"></div>
<div class="a" style="left:337px;top:160px;width:67px;height:19px;border:2px solid #4285f4"></div>
<div class="a" style="left:399.5px;top:347.7px;width:6px;height:6px;background:#4285f4;border:1px solid #fff"></div>
<div class="a" style="left:414px;top:347px;width:498px;height:309px;background:#fff;border:1px solid #3b82f3"></div>
<div class="a" style="left:470.5px;top:367px;width:425.5px;height:1px;background:#e0e0e0"></div>
<div class="t" style="left:400px;width:65.7px;text-align:right;top:362.9px;font-size:10px;color:#666">$100.00</div>
<div class="a" style="left:470.5px;top:434px;width:425.5px;height:1px;background:#e0e0e0"></div>
<div class="t" style="left:400px;width:65.7px;text-align:right;top:430px;font-size:10px;color:#666">$75.00</div>
<div class="a" style="left:470.5px;top:500px;width:425.5px;height:1px;background:#e0e0e0"></div>
<div class="t" style="left:400px;width:65.7px;text-align:right;top:496.6px;font-size:10px;color:#666">$50.00</div>
<div class="a" style="left:470.5px;top:567px;width:425.5px;height:1px;background:#e0e0e0"></div>
<div class="t" style="left:400px;width:65.7px;text-align:right;top:563.1px;font-size:10px;color:#666">$25.00</div>
<div class="a" style="left:470.5px;top:634px;width:425.5px;height:1px;background:#333"></div>
<div class="t" style="left:400px;width:65.7px;text-align:right;top:629.9px;font-size:10px;color:#666">$0.00</div>
<div class="a" style="left:484.8px;top:540.88px;width:23.9px;height:93.42px;background:#4285f4;border-radius:1px 1px 0 0"></div>
<div class="a" style="left:522.26px;top:514.15px;width:23.9px;height:120.15px;background:#4285f4;border-radius:1px 1px 0 0"></div>
<div class="a" style="left:559.72px;top:514.15px;width:23.9px;height:120.15px;background:#4285f4;border-radius:1px 1px 0 0"></div>
<div class="a" style="left:597.18px;top:540.88px;width:23.9px;height:93.42px;background:#4285f4;border-radius:1px 1px 0 0"></div>
<div class="a" style="left:634.64px;top:514.15px;width:23.9px;height:120.15px;background:#4285f4;border-radius:1px 1px 0 0"></div>
<div class="a" style="left:672.1px;top:394px;width:23.9px;height:240.3px;background:#4285f4;border-radius:1px 1px 0 0"></div>
<div class="a" style="left:709.56px;top:514.15px;width:23.9px;height:120.15px;background:#4285f4;border-radius:1px 1px 0 0"></div>
<div class="a" style="left:747.02px;top:514.15px;width:23.9px;height:120.15px;background:#4285f4;border-radius:1px 1px 0 0"></div>
<div class="a" style="left:784.48px;top:540.88px;width:23.9px;height:93.42px;background:#4285f4;border-radius:1px 1px 0 0"></div>
<div class="a" style="left:821.94px;top:540.88px;width:23.9px;height:93.42px;background:#4285f4;border-radius:1px 1px 0 0"></div>
<div class="a" style="left:859.4px;top:540.88px;width:23.9px;height:93.42px;background:#4285f4;border-radius:1px 1px 0 0"></div>
<svg style="left:898.3px;top:353.5px" width="3" height="13" viewBox="0 0 3 13"><circle cx="1.5" cy="1.5" r="1.4" fill="#616161"/><circle cx="1.5" cy="6.5" r="1.4" fill="#616161"/><circle cx="1.5" cy="11.5" r="1.4" fill="#616161"/></svg>
<div class="a" style="left:411.5px;top:344.5px;width:6px;height:6px;background:#4285f4;border:1px solid #fff"></div>
<div class="a" style="left:411.5px;top:498.5px;width:6px;height:6px;background:#4285f4;border:1px solid #fff"></div>
<div class="a" style="left:411.5px;top:652.5px;width:6px;height:6px;background:#4285f4;border:1px solid #fff"></div>
<div class="a" style="left:660px;top:344.5px;width:6px;height:6px;background:#4285f4;border:1px solid #fff"></div>
<div class="a" style="left:660px;top:652.5px;width:6px;height:6px;background:#4285f4;border:1px solid #fff"></div>
<div class="a" style="left:908.5px;top:344.5px;width:6px;height:6px;background:#4285f4;border:1px solid #fff"></div>
<div class="a" style="left:908.5px;top:498.5px;width:6px;height:6px;background:#4285f4;border:1px solid #fff"></div>
<div class="a" style="left:908.5px;top:652.5px;width:6px;height:6px;background:#4285f4;border:1px solid #fff"></div>
</div>
<div class="a" style="left:0;top:896px;width:1335px;height:10px;background:#f8f8f8;border-top:1px solid #dcdcdc"></div>
<div class="a" style="left:36.7px;top:897.5px;width:625px;height:8px;background:#c6c6c6"></div>
<div class="a" style="left:1324.2px;top:103.3px;width:10.5px;height:792.7px;background:#f8f8f8;border-left:1px solid #e0e0e0"></div>
<div class="a" style="left:1326px;top:124.8px;width:7px;height:406px;background:#c6c6c6"></div>
<div class="a" style="left:1324px;top:869.5px;width:10.5px;height:1px;background:#e4e4e4"></div>
<div class="a" style="left:1324px;top:883px;width:10.5px;height:1px;background:#e4e4e4"></div>
<svg style="left:1326.5px;top:874.5px" width="6" height="3" viewBox="0 0 6 3"><path d="M0 3L3 0l3 3z" fill="#6d6d6d"/></svg>
<svg style="left:1326.5px;top:888px" width="6" height="3" viewBox="0 0 6 3"><path d="M0 0h6L3 3z" fill="#6d6d6d"/></svg>
<div class="a" style="left:1298px;top:897px;width:1px;height:9px;background:#e4e4e4"></div>
<div class="a" style="left:1311.5px;top:897px;width:1px;height:9px;background:#e4e4e4"></div>
<div class="a" style="left:1324px;top:897px;width:1px;height:9px;background:#e4e4e4"></div>
<svg style="left:1302.5px;top:899px" width="3" height="6" viewBox="0 0 3 6"><path d="M3 0v6L0 3z" fill="#6d6d6d"/></svg>
<svg style="left:1316.5px;top:899px" width="3" height="6" viewBox="0 0 3 6"><path d="M0 0v6l3-3z" fill="#6d6d6d"/></svg>
<div class="a" style="left:1334px;top:52.4px;width:1px;height:854px;background:#d0d0d0"></div>
<div class="a" style="left:1335px;top:52.4px;width:265px;height:854px;background:#fff"></div>
<div class="a" style="left:1335px;top:52.4px;width:265px;height:30.2px;background:#616161"></div>
<div class="t" style="left:1344.4px;top:62.6px;font-size:10.3px;font-weight:bold;color:#fff">Chart editor</div>
<svg style="left:1581.8px;top:62.8px" width="8.4" height="8.4" viewBox="5 5 14 14" preserveAspectRatio="none"><path d="M19 6.41L17.59 5 12 10.59 6.41 5 5 6.41 10.59 12 5 17.59 6.41 19 12 13.410 17.59 19 19 17.59 13.41 12z" fill="#fff"/></svg>
<div class="a" style="left:1335px;top:82.6px;width:265px;height:35.4px;background:#eeeeee"></div>
<div class="t" style="left:1388px;top:95.5px;font-size:10.5px;color:#212121">DATA</div>
<div class="t" style="left:1504.4px;top:95.5px;font-size:10.25px;color:#616161">CUSTOMIZE</div>
<div class="a" style="left:1335px;top:116.8px;width:132px;height:1.6px;background:#4285f4"></div>
<div class="t" style="left:1348.3px;top:135.2px;font-size:9px;color:#5f5f5f">Chart type</div>
<svg style="left:1348px;top:149.5px" width="15" height="13.5" viewBox="0 0 15 13.5"><path d="M0.2 12.7h14.6" stroke="#c4c4c4" stroke-width="1"/><path d="M4.3 12.3V8.2M7.5 12.3V1.2M10.9 12.3V4.4" stroke="#555" stroke-width="1.35" stroke-linecap="round"/></svg>
<div class="t" style="left:1371px;top:151.9px;font-size:10.9px;color:#212121">Column chart</div>
<svg style="left:1574px;top:156.5px" width="4.5" height="2.6" viewBox="0 0 5 3" preserveAspectRatio="none"><path d="M0 0h5L2.5 3z" fill="#757575"/></svg>
<div class="a" style="left:1348px;top:167.6px;width:239px;height:1px;background:#e0e0e0"></div>
<div class="t" style="left:1348.3px;top:189.8px;font-size:9px;color:#5f5f5f">Stacking</div>
<div class="t" style="left:1348.3px;top:206.3px;font-size:10.6px;color:#212121">None</div>
<svg style="left:1574px;top:210.5px" width="4.5" height="2.6" viewBox="0 0 5 3" preserveAspectRatio="none"><path d="M0 0h5L2.5 3z" fill="#616161"/></svg>
<div class="a" style="left:1348px;top:223px;width:239px;height:1px;background:#e0e0e0"></div>
<div class="t" style="left:1348.3px;top:242.8px;font-size:9px;color:#5f5f5f">Data range</div>
<div class="t" style="left:1348.3px;top:264.2px;font-size:10.2px;color:#212121">C2:C12</div>
<svg style="left:1567px;top:264px" width="13.5" height="11" viewBox="0 0 13.5 11"><path d="M0.5 0.5h12.5v10H0.5zM0.5 3.8h12.5M0.5 7.2h12.5M4.7 0.5v10M8.8 0.5v10" fill="none" stroke="#9e9e9e" stroke-width="0.9"/></svg>
<div class="a" style="left:1348px;top:282.2px;width:239px;height:1px;background:#e0e0e0"></div>
<div class="t" style="left:1348.3px;top:299.5px;font-size:9px;color:#5f5f5f">X-axis</div>
<div class="a" style="left:1348.2px;top:317px;width:238.3px;height:26.7px;border:1px dashed #bdbdbd;border-radius:14px"></div>
<div class="t" style="left:1362.4px;top:326px;font-size:10.4px;color:#9e9e9e">Add X-axis</div>
<svg style="left:1564.2px;top:325.2px" width="13.5" height="11" viewBox="0 0 13.5 11"><path d="M0.5 0.5h12.5v10H0.5zM0.5 3.8h12.5M0.5 7.2h12.5M4.7 0.5v10M8.8 0.5v10" fill="none" stroke="#9e9e9e" stroke-width="0.9"/></svg>
<div class="t" style="left:1348.3px;top:353px;font-size:9px;color:#5f5f5f">Series</div>
<div class="a" style="left:1348.2px;top:371.3px;width:238.3px;height:26.4px;background:#eeeeee;border-radius:14px"></div>
<svg style="left:1356px;top:380.5px" width="15" height="8.5" viewBox="0 0 15 8.5"><path d="M0.6 1.6L2.1 0.65V8.5M4.3 0.65h3.3l0.6 0.6v2.6l-0.6 0.6H5l-0.6 0.6v3.2h4M9.8 0.65h3.8l0.6 0.6v2.4l-0.6 0.5H10.6M13.6 4.15l0.6 0.5v2.6l-0.6 0.6H9.8" fill="none" stroke="#7a7a7a" stroke-width="1.3"/></svg>
<div class="t" style="left:1384.3px;top:379.9px;font-size:10.3px;color:#212121">C2:C12</div>
<svg style="left:1571.8px;top:377.5px" width="3" height="13" viewBox="0 0 3 13"><circle cx="1.5" cy="1.5" r="1.3" fill="#616161"/><circle cx="1.5" cy="6.5" r="1.3" fill="#616161"/><circle cx="1.5" cy="11.5" r="1.3" fill="#616161"/></svg>
<div class="a" style="left:1348.2px;top:406px;width:238.3px;height:26.6px;border:1px dashed #bdbdbd;border-radius:14px"></div>
<div class="t" style="left:1362.4px;top:414.8px;font-size:10.4px;color:#9e9e9e">Add Series</div>
<svg style="left:1564.2px;top:414px" width="13.5" height="11" viewBox="0 0 13.5 11"><path d="M0.5 0.5h12.5v10H0.5zM0.5 3.8h12.5M0.5 7.2h12.5M4.7 0.5v10M8.8 0.5v10" fill="none" stroke="#9e9e9e" stroke-width="0.9"/></svg>
<div class="a" style="left:1349px;top:453.8px;width:12.7px;height:12.5px;border:1.3px solid #757575;border-radius:1.5px"></div>
<div class="t" style="left:1373.2px;top:455.3px;font-size:10.7px;color:#212121">Switch rows / columns</div>
<div class="a" style="left:1349px;top:477px;width:12.7px;height:12.5px;border:1.3px solid #757575;border-radius:1.5px"></div>
<div class="t" style="left:1373.2px;top:478.5px;font-size:10.7px;color:#212121">Use row 2 as headers</div>
<div class="a" style="left:1349px;top:500.4px;width:12.7px;height:12.5px;border:1.3px solid #757575;border-radius:1.5px"></div>
<div class="t" style="left:1373.2px;top:501.9px;font-size:10.7px;color:#212121">Use column C as labels</div>
<div class="a" style="left:1349px;top:523.5px;width:12.7px;height:12.5px;border:1.3px solid #757575;border-radius:1.5px"></div>
<div class="t" style="left:1373.2px;top:525px;font-size:10.7px;color:#212121">Aggregate column C</div>
<div class="a" style="left:1335px;top:905px;width:265px;height:1px;background:#e6e6e6"></div>
</body></html>
